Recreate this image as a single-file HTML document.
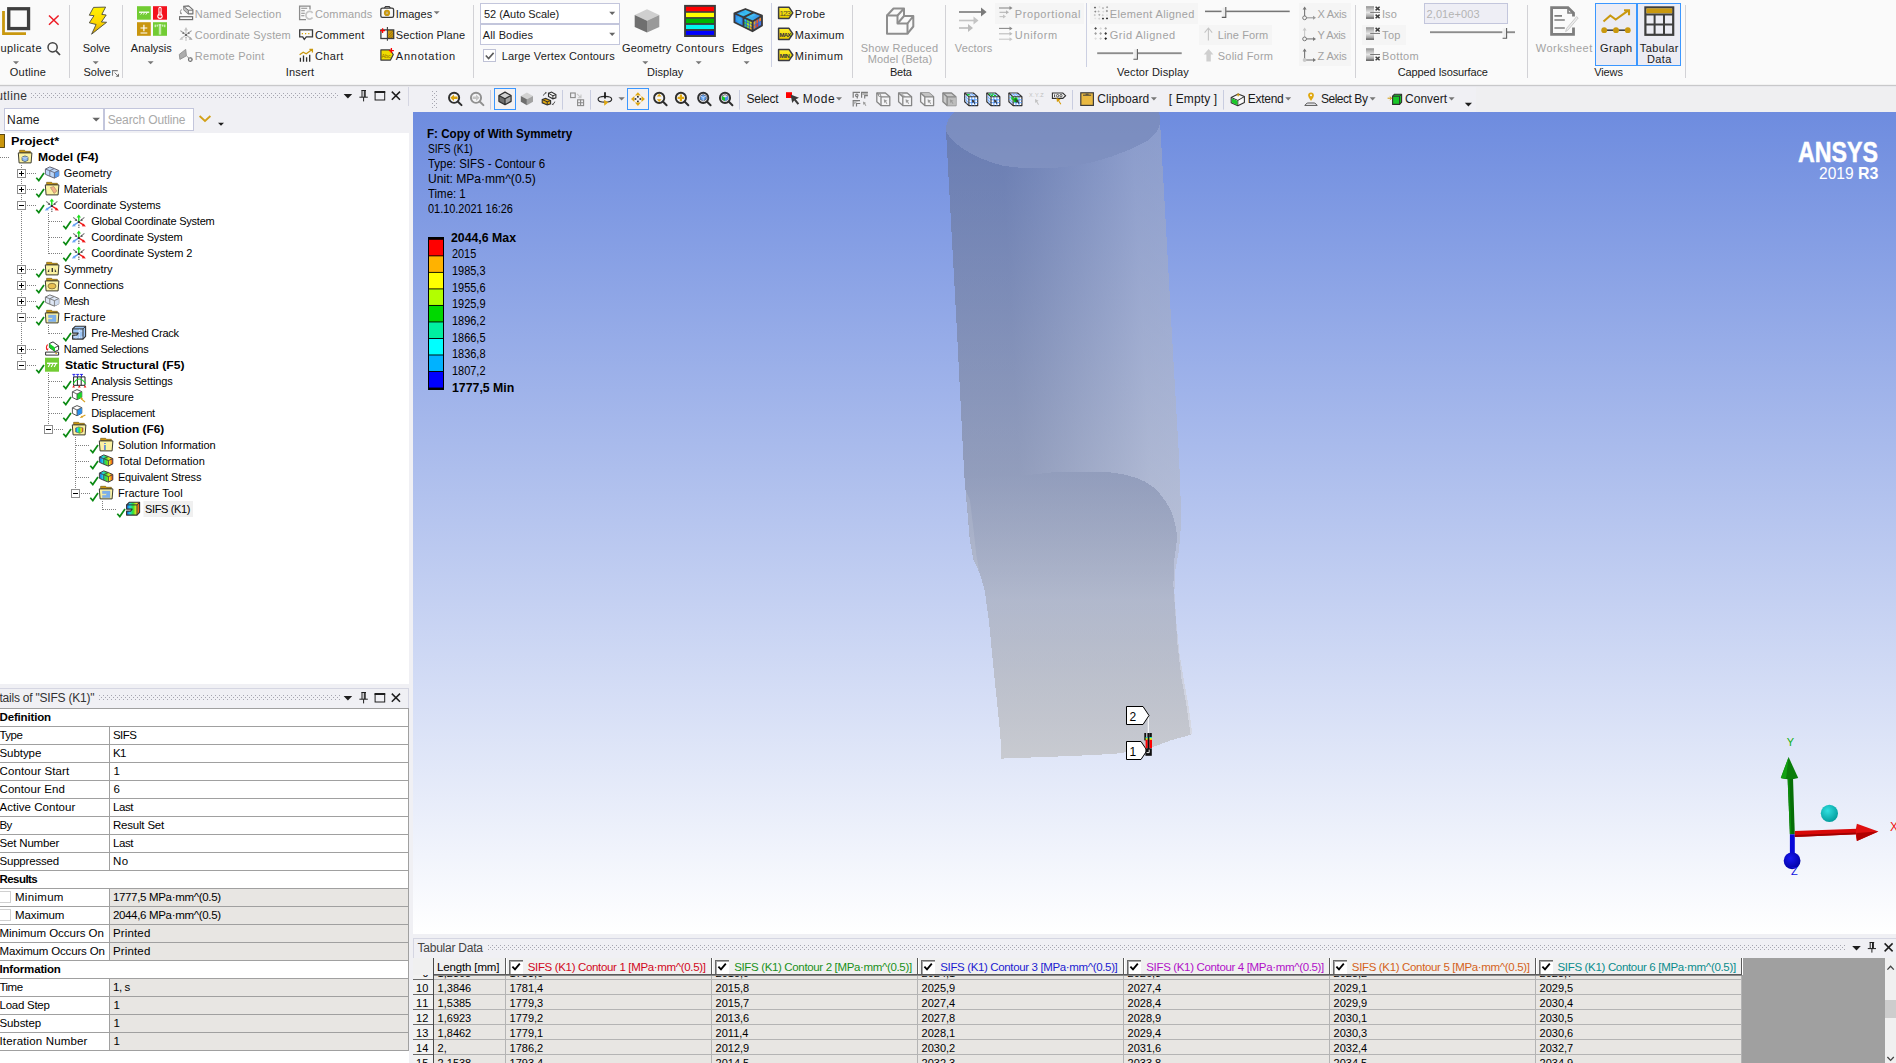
<!DOCTYPE html>
<html lang="en"><head><meta charset="utf-8"><title>ANSYS Mechanical</title>
<style>
html,body{margin:0;padding:0}
html{overflow:hidden;background:#f0f0f4}
body{width:1896px;height:1063px;overflow:hidden;position:relative;background:#f0f0f4;font-family:"Liberation Sans",sans-serif}
body>div,body>svg,body>span{position:absolute;display:block}
span{white-space:pre;line-height:1}
div{box-sizing:content-box}
</style></head>
<body>
<div style="left:0px;top:0px;width:1896px;height:85px;background:#fafafa;"></div>
<div style="left:0px;top:84px;width:1896px;height:1px;background:#f2f2f2;"></div>
<div style="left:0px;top:85px;width:1896px;height:1px;background:#c8c8ca;"></div>
<div style="left:0px;top:86px;width:1896px;height:1px;background:#e8e8ec;"></div>
<div style="left:995px;top:3px;width:88.5px;height:21px;background:#f5f5f5;"></div>
<div style="left:1090px;top:3px;width:108px;height:21px;background:#f5f5f5;"></div>
<div style="left:1198.5px;top:24.5px;width:73px;height:20.5px;background:#f5f5f5;"></div>
<div style="left:1298.5px;top:3px;width:52.5px;height:62.5px;background:#f5f5f5;"></div>
<div style="left:1362px;top:24.5px;width:44px;height:20.5px;background:#f5f5f5;"></div>
<div style="left:69px;top:5px;width:1px;height:73px;background:#d2d2d6;"></div>
<div style="left:122px;top:5px;width:1px;height:73px;background:#d2d2d6;"></div>
<div style="left:473px;top:5px;width:1px;height:73px;background:#d2d2d6;"></div>
<div style="left:852px;top:5px;width:1px;height:73px;background:#d2d2d6;"></div>
<div style="left:945px;top:5px;width:1px;height:73px;background:#d2d2d6;"></div>
<div style="left:1355px;top:5px;width:1px;height:73px;background:#d2d2d6;"></div>
<div style="left:1527px;top:5px;width:1px;height:73px;background:#d2d2d6;"></div>
<div style="left:1685px;top:5px;width:1px;height:73px;background:#d2d2d6;"></div>
<div style="left:771px;top:3px;width:1px;height:63.5px;background:#ccd0e2;"></div>
<div style="left:1086px;top:3px;width:1px;height:63.5px;background:#ccd0e2;"></div>
<div style="left:480px;top:3px;width:138px;height:19px;background:#fff;border:1px solid #c3c6dc;"></div>
<div style="left:480px;top:24px;width:138px;height:19px;background:#fff;border:1px solid #c3c6dc;"></div>
<div style="left:483px;top:49px;width:11px;height:11px;background:#fff;border:1px solid #bfc2d6;"></div>
<div style="left:1424px;top:3px;width:82px;height:19px;background:#eeeef5;border:1px solid #c3c6dc;"></div>
<div style="left:1595px;top:3px;width:40px;height:61px;background:#ececf4;border:1px solid #3b97ff;"></div>
<div style="left:1637px;top:3px;width:42px;height:61px;background:#ececf4;border:1px solid #3b97ff;"></div>
<span style="left:-8.00px;top:43.00px;font-size:11px;color:#1a1a1a;letter-spacing:0.455px;">Duplicate</span>
<span style="left:82.80px;top:43.00px;font-size:11px;color:#1a1a1a;letter-spacing:-0.033px;">Solve</span>
<span style="left:130.80px;top:43.00px;font-size:11px;color:#1a1a1a;letter-spacing:0.004px;">Analysis</span>
<span style="left:9.80px;top:67.00px;font-size:11px;color:#1a1a1a;letter-spacing:0.223px;">Outline</span>
<span style="left:83.60px;top:67.00px;font-size:11px;color:#1a1a1a;letter-spacing:-0.083px;">Solve</span>
<span style="left:194.80px;top:9.00px;font-size:11px;color:#a3a3a3;letter-spacing:0.194px;">Named Selection</span>
<span style="left:194.80px;top:30.00px;font-size:11px;color:#a3a3a3;letter-spacing:0.153px;">Coordinate System</span>
<span style="left:194.80px;top:51.00px;font-size:11px;color:#a3a3a3;letter-spacing:0.259px;">Remote Point</span>
<span style="left:285.80px;top:67.00px;font-size:11px;color:#1a1a1a;letter-spacing:0.157px;">Insert</span>
<span style="left:315.00px;top:9.00px;font-size:11px;color:#a3a3a3;letter-spacing:0.136px;">Commands</span>
<span style="left:315.00px;top:30.00px;font-size:11px;color:#1a1a1a;letter-spacing:0.252px;">Comment</span>
<span style="left:315.00px;top:51.00px;font-size:11px;color:#1a1a1a;letter-spacing:0.323px;">Chart</span>
<span style="left:395.80px;top:9.00px;font-size:11px;color:#1a1a1a;letter-spacing:0.064px;">Images</span>
<span style="left:395.80px;top:30.00px;font-size:11px;color:#1a1a1a;letter-spacing:0.126px;">Section Plane</span>
<span style="left:395.80px;top:51.00px;font-size:11px;color:#1a1a1a;letter-spacing:0.755px;">Annotation</span>
<span style="left:484.00px;top:9.00px;font-size:11px;color:#1a1a1a;letter-spacing:-0.045px;">52 (Auto Scale)</span>
<span style="left:482.80px;top:30.00px;font-size:11px;color:#1a1a1a;letter-spacing:0.142px;">All Bodies</span>
<span style="left:501.70px;top:51.00px;font-size:11px;color:#1a1a1a;letter-spacing:0.146px;">Large Vertex Contours</span>
<span style="left:622.00px;top:43.00px;font-size:11px;color:#1a1a1a;letter-spacing:0.143px;">Geometry</span>
<span style="left:675.80px;top:43.00px;font-size:11px;color:#1a1a1a;letter-spacing:0.537px;">Contours</span>
<span style="left:732.00px;top:43.00px;font-size:11px;color:#1a1a1a;letter-spacing:-0.051px;">Edges</span>
<span style="left:647.00px;top:67.00px;font-size:11px;color:#1a1a1a;letter-spacing:0.037px;">Display</span>
<span style="left:794.80px;top:9.00px;font-size:11px;color:#1a1a1a;letter-spacing:0.260px;">Probe</span>
<span style="left:794.80px;top:30.00px;font-size:11px;color:#1a1a1a;letter-spacing:0.288px;">Maximum</span>
<span style="left:794.80px;top:51.00px;font-size:11px;color:#1a1a1a;letter-spacing:0.596px;">Minimum</span>
<span style="left:860.80px;top:43.00px;font-size:11px;color:#a3a3a3;letter-spacing:0.236px;">Show Reduced</span>
<span style="left:867.80px;top:54.00px;font-size:11px;color:#a3a3a3;letter-spacing:0.129px;">Model (Beta)</span>
<span style="left:890.00px;top:67.00px;font-size:11px;color:#1a1a1a;letter-spacing:-0.280px;">Beta</span>
<span style="left:954.80px;top:43.00px;font-size:11px;color:#a3a3a3;letter-spacing:0.119px;">Vectors</span>
<span style="left:1014.80px;top:9.00px;font-size:11px;color:#a3a3a3;letter-spacing:0.579px;">Proportional</span>
<span style="left:1014.80px;top:30.00px;font-size:11px;color:#a3a3a3;letter-spacing:0.647px;">Uniform</span>
<span style="left:1109.80px;top:9.00px;font-size:11px;color:#a3a3a3;letter-spacing:0.357px;">Element Aligned</span>
<span style="left:1109.80px;top:30.00px;font-size:11px;color:#a3a3a3;letter-spacing:0.497px;">Grid Aligned</span>
<span style="left:1117.00px;top:67.00px;font-size:11px;color:#1a1a1a;letter-spacing:0.114px;">Vector Display</span>
<span style="left:1217.80px;top:30.00px;font-size:11px;color:#a3a3a3;letter-spacing:0.121px;">Line Form</span>
<span style="left:1217.80px;top:51.00px;font-size:11px;color:#a3a3a3;letter-spacing:0.224px;">Solid Form</span>
<span style="left:1317.50px;top:9.00px;font-size:11px;color:#a3a3a3;letter-spacing:-0.256px;">X Axis</span>
<span style="left:1317.50px;top:30.00px;font-size:11px;color:#a3a3a3;letter-spacing:-0.415px;">Y Axis</span>
<span style="left:1317.50px;top:51.00px;font-size:11px;color:#a3a3a3;letter-spacing:-0.131px;">Z Axis</span>
<span style="left:1382.00px;top:9.00px;font-size:11px;color:#a3a3a3;letter-spacing:0.056px;">Iso</span>
<span style="left:1382.00px;top:30.00px;font-size:11px;color:#a3a3a3;letter-spacing:0.375px;">Top</span>
<span style="left:1382.00px;top:51.00px;font-size:11px;color:#a3a3a3;letter-spacing:0.388px;">Bottom</span>
<span style="left:1426.50px;top:9.00px;font-size:11px;color:#b4b4b4;letter-spacing:0.111px;">2,01e+003</span>
<span style="left:1397.80px;top:67.00px;font-size:11px;color:#1a1a1a;letter-spacing:-0.134px;">Capped Isosurface</span>
<span style="left:1535.80px;top:43.00px;font-size:11px;color:#a3a3a3;letter-spacing:0.503px;">Worksheet</span>
<span style="left:1600.00px;top:43.00px;font-size:11px;color:#1a1a1a;letter-spacing:0.405px;">Graph</span>
<span style="left:1639.80px;top:43.00px;font-size:11px;color:#1a1a1a;letter-spacing:0.437px;">Tabular</span>
<span style="left:1647.00px;top:54.00px;font-size:11px;color:#1a1a1a;letter-spacing:0.350px;">Data</span>
<span style="left:1594.20px;top:67.00px;font-size:11px;color:#1a1a1a;letter-spacing:-0.089px;">Views</span>
<svg style="left:0px;top:0px;" width="1896" height="86" viewBox="0 0 1896 86"><path d="M13.0,61.2 h6 l-3.0,3 z" fill="#777"/><path d="M92.7,61.2 h6 l-3.0,3 z" fill="#777"/><path d="M147.6,61.2 h6 l-3.0,3 z" fill="#777"/><path d="M642.3,61.2 h6 l-3.0,3 z" fill="#777"/><path d="M695.7,61.2 h6 l-3.0,3 z" fill="#777"/><path d="M743.6,61.2 h6 l-3.0,3 z" fill="#777"/><path d="M433.7,11.3 h6 l-3.0,3 z" fill="#777"/><path d="M609.2,11.8 h6 l-3.0,3.2 z" fill="#666"/><path d="M609.2,32.8 h6 l-3.0,3.2 z" fill="#666"/><path d="M3.5,11 V33.6 H26" fill="none" stroke="#c9980f" stroke-width="2.8"/><rect x="8.75" y="8.75" width="19.8" height="19.8" fill="#fafafa" stroke="#3e3e3e" stroke-width="3.3"/><path d="M49,15.5 L58.6,24.8 M58.6,15.5 L49,24.8" stroke="#ee1c25" stroke-width="1.5" fill="none"/><circle cx="52.6" cy="47.3" r="4.6" fill="none" stroke="#444" stroke-width="1.5"/><path d="M56,50.8 L60,55" stroke="#444" stroke-width="1.8"/><defs><linearGradient id="lg1" x1="0" y1="0" x2="0" y2="1"><stop offset="0" stop-color="#fff200"/><stop offset="0.55" stop-color="#ffd800"/><stop offset="1" stop-color="#d8a400"/></linearGradient></defs><path d="M93.5,7.4 L105.6,7.1 L101.8,14.4 L106.2,15 L101.4,22 L106.6,22.3 L91.6,34.2 L96.1,24.5 L89.3,22.8 L94,15.7 L89.3,15.2 Z" fill="url(#lg1)" stroke="#4a4a3c" stroke-width="0.9" stroke-linejoin="round"/><path d="M112.5,75.8 V70.6 H117.8" stroke="#7e7e7e" stroke-width="1.1" fill="none"/><path d="M114.6,72.6 l2.6,2.6" stroke="#7e7e7e" stroke-width="1"/><path d="M119,73.4 v3.4 h-3.4 z" fill="#6a6a6a"/><rect x="137" y="6.2" width="13.8" height="13.5" fill="#72cc33"/><rect x="153" y="6.2" width="14" height="13.5" fill="#f3121d"/><rect x="137" y="22.2" width="13.8" height="13.6" fill="#c9960e"/><rect x="153" y="22.2" width="14" height="13.6" fill="#72cc33"/><path d="M139,12.2 h10.2" stroke="#fff" stroke-width="1.3" fill="none"/><path d="M140.6,14.6 l1.4,-2 M143.2,14.6 l1.4,-2 M145.8,14.6 l1.4,-2" stroke="#fff" stroke-width="0.9" fill="none"/><path d="M160,8.4 v7" stroke="#fff" stroke-width="3.2" stroke-linecap="round"/><circle cx="160" cy="16.3" r="2.7" fill="#fff"/><path d="M160,8.6 v7" stroke="#f3121d" stroke-width="1.2" stroke-linecap="round"/><circle cx="160" cy="16.3" r="1.5" fill="#f3121d"/><path d="M160,11.5 v4.5" stroke="#fff" stroke-width="0.9"/><path d="M140.5,28 h6.8 M143.9,24.8 v6.4 M140.5,33 h6.8" stroke="#fff" stroke-width="1.2"/><path d="M160,25 v9.6" stroke="#c4ecaa" stroke-width="2.4" fill="none"/><path d="M155.2,24.6 v2.6 M157.2,24.6 v2 M162.8,24.6 v2 M164.8,24.6 v2.6 M158.6,24.8 h2.8" stroke="#f4fff0" stroke-width="1" fill="none"/><path d="M183.7,6.4 L188.6,5.9 L192.9,9.6 V13.9 H188.3 L183.9,9.8 Z" fill="#f4f4f4" stroke="#6e6e6e" stroke-width="1.1" stroke-linejoin="round"/><path d="M183.7,6.4 L188.3,10.2 V13.9 L183.9,9.8 Z" fill="#bdbdbd"/><path d="M183.7,6.4 L188.3,10.2 H192.9 M188.3,10.2 V13.9" fill="none" stroke="#6e6e6e" stroke-width="1"/><rect x="179.6" y="16.7" width="13" height="2.9" fill="#f8f8f8" stroke="#6e6e6e" stroke-width="1.2"/><path d="M181.4,9.4 q-1.8,2.2 -0.4,4.4" fill="none" stroke="#8a8a8a" stroke-width="1"/><path d="M179.9,13 l1.3,1.6 l0.9,-1.9 z" fill="#8a8a8a"/><g fill="none" stroke-width="1.2"><path d="M186,34.6 V29.5" stroke="#c4c4c4"/><path d="M186,35 L180.8,38.8" stroke="#c8c8c8"/><path d="M186,35 L191.2,38.8" stroke="#b4b4b4"/><path d="M180.4,30.6 L184,33.4" stroke="#9c9c9c"/><path d="M191.6,30.6 L188,33.4" stroke="#9c9c9c"/><path d="M186,37 v3.6" stroke="#b0b0b0" stroke-width="1.6" stroke-dasharray="1.6 0.8"/></g><path d="M186,27 l-2,3.4 h4 z" fill="#c4c4c4"/><path d="M179.4,40 l3.9,-0.5 l-1.8,-2.6 z" fill="#c8c8c8"/><path d="M192.6,40 l-3.9,-0.5 l1.8,-2.6 z" fill="#aaa"/><path d="M185,34.2 l-3,-0.5 l1.7,-2 z M187,34.2 l3,-0.5 l-1.7,-2 z" fill="#7a7a7a"/><rect x="185" y="34" width="2" height="2" fill="#6a6a6a"/><path d="M179.3,54.4 L185.7,49.4 L186.4,55.8 L179.9,59.4 Z" fill="#adadad" stroke="#8e8e8e" stroke-width="0.9" stroke-linejoin="round"/><path d="M186.4,55.8 l2.6,2.4" stroke="#9a9a9a" stroke-width="1"/><circle cx="190.3" cy="59.6" r="1.9" fill="#f8f8f8" stroke="#6e6e6e" stroke-width="1.1"/><path d="M188.4,59.6 h0.9 M191.3,59.6 h0.9 M190.3,57.7 v0.9 M190.3,60.6 v0.9" stroke="#6e6e6e" stroke-width="0.8"/><g fill="none" stroke="#8c8c8c" stroke-width="1.3"><path d="M310,9.6 V6.2 H299.6 V19.6 H306"/><path d="M301.2,8.2 h6 M301.2,10.7 h3.6 M301.2,13.2 h3.6 M301.2,15.7 h3.2" stroke-width="1.1"/></g><path d="M312.6,13 a3.7,3.9 0 1 0 0,4.6" fill="none" stroke="#c6c6c6" stroke-width="1.7"/><path d="M299.7,29.9 h12.8 v7 h-6.2 l-2,2.5 l-1.6,-2.5 h-3 z" fill="none" stroke="#3c3c3c" stroke-width="1.3" stroke-linejoin="miter"/><path d="M301.8,33.6 h1.2 M305,33.6 h1.2 M308.2,33.6 h1.2" stroke="#d9a400" stroke-width="1.2"/><path d="M300.4,61.8 v-4 M303.5,61.8 v-6.3 M306.6,61.8 v-4.6 M309.7,61.8 v-7" stroke="#2e2e2e" stroke-width="1.3"/><path d="M299.6,54.8 l3.6,-2.6 l3,1.6 l5.6,-4 M309.4,49.4 h3 v3" fill="none" stroke="#c9980f" stroke-width="1.3"/><path d="M384.4,8.2 l1.2,-1.6 h3.6 l1.2,1.6" fill="none" stroke="#3c3c3c" stroke-width="1.2"/><rect x="380.8" y="8.2" width="12.8" height="9.2" rx="1.6" fill="#f8f8f8" stroke="#3c3c3c" stroke-width="1.3"/><circle cx="387" cy="12.9" r="3.1" fill="#c9980f"/><circle cx="387" cy="12.9" r="1.2" fill="#f0e0b0"/><circle cx="387" cy="12.9" r="0.6" fill="#6a5000"/><rect x="388" y="30" width="5.6" height="8.4" fill="#c9980f"/><path d="M388.4,35.4 l4.6,-4.6 M388.4,38 l5,-5 M390.6,38.2 l3,-3" stroke="#96700a" stroke-width="0.9"/><rect x="380.9" y="29.9" width="12.8" height="8.6" fill="none" stroke="#3c3c3c" stroke-width="1.3"/><path d="M387.4,27 v13.8" stroke="#3c3c3c" stroke-width="1.1"/><path d="M380.2,30.6 h4.8 M382.6,28.2 v4.8" stroke="#f00" stroke-width="1.3"/><path d="M380.9,49.9 h9.2 l3.2,4.6 l-2.8,5.6 h-9.6 z" fill="#efdc00" stroke="#3c3c3c" stroke-width="1.2" stroke-linejoin="round"/><path d="M388.9,50.6 h5 M391.4,48.1 v5" stroke="#f00" stroke-width="1.3"/><path d="M485.8,55.5 l2.8,3 l5,-5.6" fill="none" stroke="#5a5a5a" stroke-width="1.6"/><path d="M647,9.3 L659.3,15 L647,20.8 L634.7,15 Z" fill="#cfcfcf"/><path d="M634.7,15 L647,20.8 V32.6 L634.7,27 Z" fill="#6f6f6f"/><path d="M659.3,15 L647,20.8 V32.6 L659.3,27 Z" fill="#999"/><rect x="684.1" y="4.9" width="31.8" height="32.1" fill="#3c3c3c"/><rect x="686" y="6.8" width="28" height="4.40" fill="#ff0000"/><rect x="686" y="12.8" width="28" height="4.30" fill="#ffff00"/><rect x="686" y="18.7" width="28" height="4.40" fill="#00b400"/><rect x="686" y="24.9" width="28" height="4.10" fill="#00f6f0"/><rect x="686" y="30.9" width="28" height="4.00" fill="#0000ff"/><defs><linearGradient id="eg1" x1="0" y1="0" x2="1" y2="0"><stop offset="0" stop-color="#2a78e8"/><stop offset="0.45" stop-color="#38c0f0"/><stop offset="1" stop-color="#3a88e8"/></linearGradient><linearGradient id="eg3" x1="0" y1="0" x2="1" y2="0"><stop offset="0" stop-color="#2468e0"/><stop offset="0.5" stop-color="#34a8f0"/><stop offset="1" stop-color="#2a74e4"/></linearGradient></defs><path d="M734.4,13.3 L745.4,9 L762,15.7 L752.5,21.4 Z" fill="url(#eg1)"/><path d="M734.4,13.3 L743.5,17.35 V26.8 L734.4,22.3 Z" fill="url(#eg3)"/><path d="M743.5,17.35 L752.5,21.4 V31.3 L743.5,26.8 Z" fill="#2a60d0"/><path d="M744.10,18.50 l2.2,1 v2.3 l-2.2,-1 z" fill="#28c8d8"/><path d="M744.10,21.50 l2.2,1 v2.3 l-2.2,-1 z" fill="#30d060"/><path d="M744.10,24.50 l2.2,1 v2.3 l-2.2,-1 z" fill="#30b8a0"/><path d="M746.95,19.78 l2.2,1 v2.3 l-2.2,-1 z" fill="#60d840"/><path d="M746.95,22.78 l2.2,1 v2.3 l-2.2,-1 z" fill="#a8e020"/><path d="M746.95,25.78 l2.2,1 v2.3 l-2.2,-1 z" fill="#80d830"/><path d="M749.80,21.06 l2.2,1 v2.3 l-2.2,-1 z" fill="#d8e820"/><path d="M749.80,24.06 l2.2,1 v2.3 l-2.2,-1 z" fill="#f0d020"/><path d="M749.80,27.06 l2.2,1 v2.3 l-2.2,-1 z" fill="#f0b020"/><path d="M752.5,21.4 L762,15.7 V25.6 L752.5,31.3 Z" fill="#3466d8"/><path d="M753.60,21.60 l1.8,-1.08 v3.6 l-1.8,1.08 z" fill="#f0a020"/><path d="M753.60,25.90 l1.8,-1.08 v3.2 l-1.8,1.08 z" fill="#f07818"/><path d="M756.40,19.92 l1.8,-1.08 v3.6 l-1.8,1.08 z" fill="#f06018"/><path d="M756.40,24.22 l1.8,-1.08 v3.2 l-1.8,1.08 z" fill="#e83818"/><path d="M759.20,18.24 l1.8,-1.08 v3.6 l-1.8,1.08 z" fill="#f08828"/><path d="M759.20,22.54 l1.8,-1.08 v3.2 l-1.8,1.08 z" fill="#4878e0"/><path d="M737,14.6 l4.6,-1.8 l3.4,1.5 l-4.6,1.9 z" fill="#40d0f0" fill-opacity="0.7"/><path d="M747.5,15 l4.6,-1.8 l4,1.7 l-4.4,2.2 z" fill="#50c8f0" fill-opacity="0.55"/><path d="M736,16.2 l5.6,2.6 v4 l-5.6,-2.6 z" fill="#38b0f0" fill-opacity="0.6"/><path d="M734.4,13.3 L745.4,9 L762,15.7 V25.6 L752.5,31.3 L734.4,22.3 Z M734.4,13.3 L752.5,21.4 L762,15.7 M752.5,21.4 V31.3 M743.5,17.35 V26.8 M743.5,17.35 L753.7,12.35" fill="none" stroke="#3a3a3a" stroke-width="1.8" stroke-linejoin="round"/><defs><linearGradient id="tagg" x1="0" y1="0" x2="0" y2="1"><stop offset="0" stop-color="#fff030"/><stop offset="0.6" stop-color="#f4dc08"/><stop offset="1" stop-color="#e4c800"/></linearGradient></defs><path d="M778.6,7.2 h10.4 l3.8,5.6 l-3.8,5.6 h-10.4 z" fill="url(#tagg)" stroke="#3c3c42" stroke-width="1.5" stroke-linejoin="round"/><path d="M778.6,28.3 h10.4 l3.8,5.6 l-3.8,5.6 h-10.4 z" fill="url(#tagg)" stroke="#3c3c42" stroke-width="1.5" stroke-linejoin="round"/><path d="M778.6,49.400000000000006 h10.4 l3.8,5.6 l-3.8,5.6 h-10.4 z" fill="url(#tagg)" stroke="#3c3c42" stroke-width="1.5" stroke-linejoin="round"/><g fill="none" stroke="#8e8e8e" stroke-width="2" stroke-linejoin="round"><path d="M887,15.5 h10.5 v8 h10 v10.2 h-20.5 z"/><path d="M887,15.5 l6.5,-7 h10.5 l-6.5,7 M904,8.5 v7.5 l-6.5,7.5 M904,16 h9.3 l-5.8,7.5 M913.3,16 v10.5 l-5.8,7.2"/></g><path d="M959,12 h23" stroke="#7a7a7a" stroke-width="1.6"/><path d="M981,7.6 l5.6,4.4 l-5.6,4.4 z" fill="#7a7a7a"/><path d="M959,20.5 h15" stroke="#c4c4c4" stroke-width="1.6"/><path d="M973.5,16.5 l5,4 l-5,4 z" fill="#c4c4c4"/><path d="M959,28 h10" stroke="#bcbcbc" stroke-width="1.6"/><path d="M968,24 l5,4 l-5,4 z" fill="#bcbcbc"/><path d="M999,8 h11" stroke="#8a8a8a" stroke-width="1.1"/><path d="M1009.5,6 l3,2 l-3,2 z" fill="#8a8a8a"/><path d="M999.5,12.3 h7" stroke="#b4b4b4" stroke-width="1.1"/><path d="M1006,10.3 l3,2 l-3,2 z" fill="#b4b4b4"/><path d="M999.5,16.6 h4" stroke="#c4c4c4" stroke-width="1.1"/><path d="M1003,14.6 l3,2 l-3,2 z" fill="#c4c4c4"/><path d="M999,28.4 h11" stroke="#8a8a8a" stroke-width="1.1"/><path d="M1009.5,26.4 l3,2 l-3,2 z" fill="#8a8a8a"/><path d="M999,33.8 h11" stroke="#bbb" stroke-width="1.1"/><path d="M1009.5,31.8 l3,2 l-3,2 z" fill="#bbb"/><path d="M999,39.2 h11" stroke="#c8c8c8" stroke-width="1.1"/><path d="M1009.5,37.2 l3,2 l-3,2 z" fill="#c8c8c8"/><path d="M1095.6,27.0 L1097.0,28.4 L1095.6,29.799999999999997 L1094.1999999999998,28.4 Z" fill="#4a4a4a"/><path d="M1100.6499999999999,27.0 L1102.05,28.4 L1100.6499999999999,29.799999999999997 L1099.2499999999998,28.4 Z" fill="#dcdcdc"/><path d="M1105.6999999999998,27.0 L1107.1,28.4 L1105.6999999999998,29.799999999999997 L1104.2999999999997,28.4 Z" fill="#a8a8a8"/><path d="M1095.6,32.1 L1097.0,33.5 L1095.6,34.9 L1094.1999999999998,33.5 Z" fill="#a0a0a0"/><path d="M1100.6499999999999,32.1 L1102.05,33.5 L1100.6499999999999,34.9 L1099.2499999999998,33.5 Z" fill="#a0a0a0"/><path d="M1105.6999999999998,32.1 L1107.1,33.5 L1105.6999999999998,34.9 L1104.2999999999997,33.5 Z" fill="#3a3a3a"/><path d="M1095.6,37.199999999999996 L1097.0,38.599999999999994 L1095.6,39.99999999999999 L1094.1999999999998,38.599999999999994 Z" fill="#dedede"/><path d="M1100.6499999999999,37.199999999999996 L1102.05,38.599999999999994 L1100.6499999999999,39.99999999999999 L1099.2499999999998,38.599999999999994 Z" fill="#c8c8c8"/><path d="M1105.6999999999998,37.199999999999996 L1107.1,38.599999999999994 L1105.6999999999998,39.99999999999999 L1104.2999999999997,38.599999999999994 Z" fill="#1e1e1e"/><path d="M1095.0,6.449999999999999 L1096.15,7.6 L1095.0,8.75 L1093.85,7.6 Z" fill="#5a5a5a"/><path d="M1099.5,5.85 L1100.65,7.0 L1099.5,8.15 L1098.35,7.0 Z" fill="#e0e0e0"/><path d="M1103.0,6.949999999999999 L1104.15,8.1 L1103.0,9.25 L1101.85,8.1 Z" fill="#b0b0b0"/><path d="M1107.1000000000001,6.049999999999999 L1108.2500000000002,7.199999999999999 L1107.1000000000001,8.35 L1105.95,7.199999999999999 Z" fill="#9a9a9a"/><path d="M1095.3,10.45 L1096.45,11.6 L1095.3,12.75 L1094.1499999999999,11.6 Z" fill="#8a8a8a"/><path d="M1098.6000000000001,10.249999999999998 L1099.7500000000002,11.399999999999999 L1098.6000000000001,12.549999999999999 L1097.45,11.399999999999999 Z" fill="#b8b8b8"/><path d="M1103.3,10.549999999999999 L1104.45,11.7 L1103.3,12.85 L1102.1499999999999,11.7 Z" fill="#d8d8d8"/><path d="M1106.9,9.85 L1108.0500000000002,11.0 L1106.9,12.15 L1105.75,11.0 Z" fill="#8a8a8a"/><path d="M1094.8,13.950000000000001 L1095.95,15.100000000000001 L1094.8,16.25 L1093.6499999999999,15.100000000000001 Z" fill="#c0c0c0"/><path d="M1099.3000000000002,13.65 L1100.4500000000003,14.8 L1099.3000000000002,15.950000000000001 L1098.15,14.8 Z" fill="#a8a8a8"/><path d="M1102.8,14.05 L1103.95,15.200000000000001 L1102.8,16.35 L1101.6499999999999,15.200000000000001 Z" fill="#c8c8c8"/><path d="M1107.0,13.950000000000001 L1108.15,15.100000000000001 L1107.0,16.25 L1105.85,15.100000000000001 Z" fill="#e0e0e0"/><path d="M1095.2,17.25 L1096.3500000000001,18.4 L1095.2,19.549999999999997 L1094.05,18.4 Z" fill="#e4e4e4"/><path d="M1099.2,17.55 L1100.3500000000001,18.7 L1099.2,19.849999999999998 L1098.05,18.7 Z" fill="#d0d0d0"/><path d="M1103.0,17.45 L1104.15,18.599999999999998 L1103.0,19.749999999999996 L1101.85,18.599999999999998 Z" fill="#2a2a2a"/><path d="M1107.0,17.25 L1108.15,18.4 L1107.0,19.549999999999997 L1105.85,18.4 Z" fill="#1e1e1e"/><rect x="1097.2" y="52.400000000000006" width="84.5" height="1.5" fill="#767676"/><rect x="1097.2" y="53.900000000000006" width="84.5" height="0.8" fill="#e2e2e2"/><rect x="1133.4" y="48.900000000000006" width="4.4" height="10.6" fill="#ececec"/><path d="M1133.7,59.2 V48.900000000000006 H1137.4" fill="none" stroke="#fdfdfd" stroke-width="0.8"/><path d="M1137.4,48.900000000000006 V59.2 H1133.4" fill="none" stroke="#5e5e5e" stroke-width="1.1"/><rect x="1205" y="10.6" width="84.70000000000005" height="1.5" fill="#767676"/><rect x="1205" y="12.1" width="84.70000000000005" height="0.8" fill="#e2e2e2"/><rect x="1221.8" y="7.1000000000000005" width="4.4" height="10.6" fill="#ececec"/><path d="M1222.1,17.4 V7.1000000000000005 H1225.8" fill="none" stroke="#fdfdfd" stroke-width="0.8"/><path d="M1225.8,7.1000000000000005 V17.4 H1221.8" fill="none" stroke="#5e5e5e" stroke-width="1.1"/><rect x="1430" y="31.400000000000002" width="85" height="1.5" fill="#767676"/><rect x="1430" y="32.900000000000006" width="85" height="0.8" fill="#e2e2e2"/><rect x="1502.6" y="27.900000000000002" width="4.4" height="10.6" fill="#ececec"/><path d="M1502.8999999999999,38.2 V27.900000000000002 H1506.6" fill="none" stroke="#fdfdfd" stroke-width="0.8"/><path d="M1506.6,27.900000000000002 V38.2 H1502.6" fill="none" stroke="#5e5e5e" stroke-width="1.1"/><path d="M1208.4,40.6 V28.5 M1204.6,32.6 L1208.4,28 L1212.2,32.6" fill="none" stroke="#c4c4c4" stroke-width="1.1"/><path d="M1208.6,49 l4.8,5.6 h-2.6 v6.8 h-4.4 v-6.8 h-2.6 z" fill="#cfcfcf"/><path d="M1304.6,17.8 V7.800000000000001" stroke="#777" stroke-width="1.1"/><path d="M1302.6,9.4 l2,-3 l2,3 z" fill="#777"/><path d="M1304.6,17.8 H1314" stroke="#999" stroke-width="1.1"/><path d="M1313,15.8 l3,2 l-3,2 z" fill="#999"/><circle cx="1304.6" cy="17.8" r="1.9" fill="#f4f4f4" stroke="#777" stroke-width="1"/><path d="M1304.6,38.900000000000006 V28.900000000000006" stroke="#c8c8c8" stroke-width="1.1"/><path d="M1302.6,30.500000000000007 l2,-3 l2,3 z" fill="#c8c8c8"/><path d="M1304.6,38.900000000000006 H1314" stroke="#777" stroke-width="1.1"/><path d="M1313,36.900000000000006 l3,2 l-3,2 z" fill="#777"/><circle cx="1304.6" cy="38.900000000000006" r="1.9" fill="#f4f4f4" stroke="#777" stroke-width="1"/><path d="M1304.6,60.0 V50.0" stroke="#777" stroke-width="1.1"/><path d="M1302.6,51.6 l2,-3 l2,3 z" fill="#777"/><path d="M1304.6,60.0 H1314" stroke="#777" stroke-width="1.1"/><path d="M1313,58.0 l3,2 l-3,2 z" fill="#777"/><circle cx="1304.6" cy="60.0" r="1.9" fill="#c8c8c8"/><defs><linearGradient id="ig" x1="0" y1="0" x2="0" y2="1"><stop offset="0" stop-color="#8e8e8e"/><stop offset="0.18" stop-color="#b4b4b4"/><stop offset="0.5" stop-color="#e6e6e6"/><stop offset="0.82" stop-color="#a4a4a4"/><stop offset="1" stop-color="#4e4e4e"/></linearGradient></defs><rect x="1366" y="6.20" width="8" height="12.6" fill="url(#ig)"/><path d="M1370.2,12.40 h9.8" stroke="#6a6a6a" stroke-width="0.9"/><path d="M1375.6,6.8 l4,3.6 M1379.6,6.8 l-4,3.6" stroke="#3c3c3c" stroke-width="1.5"/><path d="M1375.6,14.600000000000001 l4,3.6 M1379.6,14.600000000000001 l-4,3.6" stroke="#3c3c3c" stroke-width="1.5"/><rect x="1366" y="27.25" width="8" height="12.6" fill="url(#ig)"/><path d="M1370.2,33.45 h9.8" stroke="#6a6a6a" stroke-width="0.9"/><path d="M1375.6,27.85 l4,3.6 M1379.6,27.85 l-4,3.6" stroke="#3c3c3c" stroke-width="1.5"/><rect x="1366" y="48.30" width="8" height="12.6" fill="url(#ig)"/><path d="M1370.2,54.50 h9.8" stroke="#6a6a6a" stroke-width="0.9"/><path d="M1375.6,56.7 l4,3.6 M1379.6,56.7 l-4,3.6" stroke="#3c3c3c" stroke-width="1.5"/><g fill="none" stroke="#7e7e7e"><path d="M1573.5,27.4 V34.4 H1551.6 V7.6 H1568 L1573.5,13 V16.5" stroke-width="2.8" stroke-linejoin="miter"/><path d="M1568,7.6 V13 H1573.5" stroke-width="1.6"/><path d="M1554.4,15.8 h7.6 M1554.4,20 h10.4 M1554.4,28 h10.4" stroke-width="1.7"/></g><path d="M1565.6,31.6 l1,-3.2 l10,-11.8 l1.6,1.4 l-10,11.8 z" fill="#ececec" stroke="#c2c2c2" stroke-width="0.8"/><path d="M1603.5,21.5 l6.8,-6 l5.4,4 l12.4,-8.8 M1624,10.3 h5 v5" fill="none" stroke="#c9980f" stroke-width="2.1"/><path d="M1604,30.2 h24" stroke="#444" stroke-width="1.6"/><circle cx="1604.2" cy="30.2" r="2.9" fill="#c9980f"/><circle cx="1616" cy="30.2" r="2.9" fill="#c9980f"/><circle cx="1627.8" cy="30.2" r="2.9" fill="#c9980f"/><rect x="1645.4" y="7.4" width="27.8" height="27.4" fill="none" stroke="#3e3e3e" stroke-width="2.2"/><rect x="1646.4" y="8.4" width="25.8" height="5" fill="#c9980f"/><path d="M1645.4,14.4 h27.8 M1645.4,24.4 h27.8 M1654.6,14.4 v20.4 M1664,14.4 v20.4" stroke="#3e3e3e" stroke-width="2"/></svg>
<span style="left:381.60px;top:54.00px;font-size:5.5px;color:#8a6c00;letter-spacing:-0.158px;">Abc</span>
<span style="left:779.60px;top:10.00px;font-size:8px;color:#55502c;letter-spacing:-0.980px;">123</span>
<span style="left:779.60px;top:32.00px;font-size:6px;color:#2e2e40;font-weight:bold;letter-spacing:-0.890px;">MAX</span>
<span style="left:779.80px;top:53.00px;font-size:6px;color:#2e2e40;font-weight:bold;letter-spacing:-0.513px;">MIN</span>
<div style="left:0px;top:87px;width:1896px;height:25px;background:#f0f0f4;"></div>
<div style="left:1476px;top:87px;width:420px;height:25px;background:#efeff1;"></div>
<svg style="left:0px;top:86px;" width="1896" height="48" viewBox="0 86 1896 48"><defs><pattern id="dots" x="3" y="1" width="4" height="4" patternUnits="userSpaceOnUse"><rect x="0" y="0" width="1" height="1" fill="#a6a6b0"/><rect x="2" y="2" width="1" height="1" fill="#a6a6b0"/></pattern><pattern id="dotsg" x="0" y="3" width="4" height="4" patternUnits="userSpaceOnUse"><rect x="0" y="0" width="1" height="1" fill="#a6a6b0"/><rect x="2" y="2" width="1" height="1" fill="#a6a6b0"/></pattern></defs><rect x="31" y="93" width="308" height="5" fill="url(#dots)"/><path d="M343.6,94 h8.6 l-4.3,4.4 z" fill="#1e1e1e"/><path d="M361.4,90.5 h4.6 M362.0,90.5 v6.6 M365.2,90.5 v6.6 M364.29999999999995,90.5 v6.6 M359.4,97.2 h8.4 M363.59999999999997,97.2 v4.2" stroke="#1e1e1e" stroke-width="1" fill="none"/><rect x="375.1" y="92" width="9.6" height="8" fill="none" stroke="#1e1e1e" stroke-width="1"/><path d="M374.6,92 h10.6" stroke="#1e1e1e" stroke-width="2"/><path d="M391.8,91.6 l8.2,8.2 M400.0,91.6 l-8.2,8.2" stroke="#1e1e1e" stroke-width="1.5"/><rect x="408" y="87" width="1" height="19" fill="#d5d6e2"/><rect x="432" y="91" width="5" height="17" fill="url(#dotsg)"/><rect x="490" y="90" width="1" height="19.6" fill="#c9cde0"/><rect x="562" y="90" width="1" height="19.6" fill="#c9cde0"/><rect x="590" y="90" width="1" height="19.6" fill="#c9cde0"/><rect x="739" y="90" width="1" height="19.6" fill="#c9cde0"/><rect x="1072" y="90" width="1" height="19.6" fill="#c9cde0"/><rect x="1223" y="90" width="1" height="19.6" fill="#c9cde0"/><rect x="494.5" y="88.5" width="21" height="21" fill="#f4f1f1" stroke="#3b97ff" stroke-width="1"/><rect x="627.5" y="88.5" width="21" height="21" fill="#f4f1f1" stroke="#3b97ff" stroke-width="1"/><circle cx="454.1" cy="97.8" r="5.1" fill="#f4f4f6" stroke="#2e2e2e" stroke-width="1.9"/><path d="M458.0,101.7 L461.5,105.1" stroke="#2e2e2e" stroke-width="2" stroke-linecap="round"/><path d="M450.4,97.8 l3.6,-3.2 v2 h3.6 v2.4 h-3.6 v2 z" fill="#d9a30a"/><circle cx="476" cy="97.8" r="5.1" fill="#f4f4f6" stroke="#909090" stroke-width="1.9"/><path d="M479.9,101.7 L483.4,105.1" stroke="#909090" stroke-width="2" stroke-linecap="round"/><path d="M479.6,97.8 l-3.6,-3.2 v2 h-3.4 v2.4 h3.4 v2 z" fill="#c4c4c4"/><path d="M505,92.10000000000001 L511.1,95.45 L505,98.80000000000001 L498.9,95.45 Z" fill="#d2d2d2"/><path d="M498.9,95.45 L505,98.80000000000001 V104.7 L498.9,101.35000000000001 Z" fill="#6e6e6e"/><path d="M511.1,95.45 L505,98.80000000000001 V104.7 L511.1,101.35000000000001 Z" fill="#a2a2a2"/><path d="M505,92.10000000000001 L511.1,95.45 V101.35000000000001 L505,104.7 L498.9,101.35000000000001 V95.45 Z M498.9,95.45 L505,98.80000000000001 L511.1,95.45 M505,98.80000000000001 V104.7" fill="none" stroke="#303030" stroke-width="1.2" stroke-linejoin="round"/><path d="M526.9,92.60000000000001 L533.0,95.95 L526.9,99.30000000000001 L520.8,95.95 Z" fill="#d2d2d2"/><path d="M520.8,95.95 L526.9,99.30000000000001 V105.2 L520.8,101.85000000000001 Z" fill="#6e6e6e"/><path d="M533.0,95.95 L526.9,99.30000000000001 V105.2 L533.0,101.85000000000001 Z" fill="#a2a2a2"/><path d="M548.5,93.2 l3,-1.2 l4.4,2.6 v3.2 l-3,1 l-4.4,-2.4 z" fill="#f4f4f4" stroke="#303030" stroke-width="1.1"/><path d="M548.5,93.2 l4.4,2.6 v3 M552.9,95.8 l3,-1.2" fill="none" stroke="#303030" stroke-width="1"/><path d="M542.2,99.6 l3.4,-1.2 l5,2.2 v3.2 l-3.4,1.2 l-5,-2.2 z" fill="#e0a810" stroke="#303030" stroke-width="1.1"/><path d="M542.2,99.6 l5,2.2 v3.2 M547.2,101.8 l3.4,-1.2" fill="none" stroke="#303030" stroke-width="1"/><path d="M543.4,95.6 q0.6,-2.2 2.6,-2.8 M554.8,101.6 q-0.4,2 -2.2,2.8" fill="none" stroke="#555" stroke-width="1"/><path d="M545.2,91.8 l1.8,1 l-1.6,1.2 z M553.4,105.2 l-1.8,-0.8 l1.6,-1.2 z" fill="#555"/><rect x="570.6" y="93" width="4.6" height="4.6" fill="none" stroke="#8a8a8a" stroke-width="1.1"/><path d="M577,93.8 l3.6,3.6 M581,94.6 v3.2 h-3.2" fill="none" stroke="#c8c8c8" stroke-width="1.1"/><rect x="577.6" y="99.8" width="6" height="5.8" fill="none" stroke="#8a8a8a" stroke-width="1.1"/><path d="M580.6,99.8 v5.8 M577.6,102.7 h6" stroke="#8a8a8a" stroke-width="1.1"/><ellipse cx="604.9" cy="99.3" rx="6.8" ry="2.9" fill="none" stroke="#2e2e2e" stroke-width="1.2"/><path d="M605,92.2 v6.4" stroke="#1a1a1a" stroke-width="1.8"/><path d="M604.2,99.8 l4,2.8 l-4,3.2 z" fill="#e0a810"/><path d="M618.4,97.2 h6.4 l-3.2,3.2 z" fill="#777"/><path d="M637.9,92.2 l3,3.4 h-6 z M637.9,105.9 l3,-3.4 h-6 z M631.0,99 l3.4,-3 v6 z M644.9,99 l-3.4,-3 v6 z" fill="#e0a810"/><rect x="637.1" y="96" width="1.6" height="1.6" fill="#222"/><rect x="637.1" y="100.6" width="1.6" height="1.6" fill="#222"/><rect x="634.6999999999999" y="98.2" width="1.6" height="1.6" fill="#222"/><rect x="639.5" y="98.2" width="1.6" height="1.6" fill="#222"/><circle cx="659.2" cy="97.9" r="5.1" fill="#f4f4f6" stroke="#2e2e2e" stroke-width="1.9"/><path d="M663.1,101.80000000000001 L666.6,105.2" stroke="#2e2e2e" stroke-width="2" stroke-linecap="round"/><path d="M659.2,93.8 l2.4,2.8 h-4.8 z M659.2,102 l2.4,-2.8 h-4.8 z" fill="#e0a810"/><circle cx="680.9" cy="97.9" r="5.1" fill="#f4f4f6" stroke="#2e2e2e" stroke-width="1.9"/><path d="M684.8,101.80000000000001 L688.3,105.2" stroke="#2e2e2e" stroke-width="2" stroke-linecap="round"/><path d="M677.6,97.9 h6.6 M680.9,94.6 v6.6" stroke="#e0a810" stroke-width="2.2"/><circle cx="703.2" cy="97.9" r="5.1" fill="#f4f4f6" stroke="#2e2e2e" stroke-width="1.9"/><path d="M707.1,101.80000000000001 L710.6,105.2" stroke="#2e2e2e" stroke-width="2" stroke-linecap="round"/><path d="M703.2,94.6 l3,1.4 v3.4 l-3,1.6 l-3,-1.6 v-3.4 z" fill="#5aa0f0" stroke="#445" stroke-width="0.7"/><path d="M700.2,96 l3,1.5 l3,-1.5 M703.2,97.5 v3.5" fill="none" stroke="#eef" stroke-width="0.7"/><circle cx="725" cy="97.9" r="5.1" fill="#f4f4f6" stroke="#2e2e2e" stroke-width="1.9"/><path d="M728.9,101.80000000000001 L732.4,105.2" stroke="#2e2e2e" stroke-width="2" stroke-linecap="round"/><path d="M725,94.6 l3,1.4 v3.4 l-3,1.6 l-3,-1.6 v-3.4 z" fill="#e8e8e8" stroke="#445" stroke-width="0.7"/><path d="M722,96 l3,1.5 v3.5 l-3,-1.6 z" fill="#18c828"/><path d="M728,96 l-3,1.5 v3.5 l3,-1.6 z" fill="#4a90e8"/><rect x="786" y="92.2" width="6" height="5.8" fill="#f00"/><path d="M790.6,94.6 l8.4,3.2 l-3.2,1.4 l3.4,4.4 l-1.6,1.2 l-3.4,-4.4 l-2,2.6 z" fill="#3a3a3a"/><path d="M836,97.2 h6 l-3,3.2 z" fill="#777"/><g fill="none" stroke="#7c7c7c" stroke-width="1.2"><path d="M853.2,97.8 V92.4 H860"/><circle cx="856.8" cy="95.4" r="1.2"/><path d="M857.3,96.6 V98.4"/><path d="M861.6,97.8 V92.4 H867.9 M864.7,98.4 V95.6 H867.9"/><path d="M853.2,106.6 V100.7 H860 M856.5,106.6 V103.5 H860.3"/></g><rect x="862.2" y="93" width="5.7" height="2" fill="#b4b4b4"/><path d="M853.8,101.3 h4.2 l-4.2,3.4 z" fill="#b4b4b4"/><path d="M863,101.4 l3.2,1.5 l-1.2,0.5 l1.4,2.2 l-0.8,0.5 l-1.4,-2.2 l-0.9,1 z" fill="#9a9a9a"/><path d="M876.8000000000001,93.0 h8.6 l4.4,3.8 v8.8 h-8.8 l-4.2,-3.8 z" fill="#f4f4f6" stroke="#868686" stroke-width="1.3" stroke-linejoin="round"/><path d="M876.8000000000001,93.0 l4.2,3.8 h8.8 M881.0,96.8 v8.8" fill="none" stroke="#868686" stroke-width="1.3"/><path d="M883.8000000000001,99.19999999999999 l3.6,1.6 l-1.4,0.6 l1.4,2 l-0.8,0.6 l-1.4,-2 l-1,1.2 z" fill="#9a9a9a"/><circle cx="879.6" cy="95.19999999999999" r="1.2" fill="#f4f4f6" stroke="#868686" stroke-width="0.9"/><path d="M898.6,93.0 h8.6 l4.4,3.8 v8.8 h-8.8 l-4.2,-3.8 z" fill="#f4f4f6" stroke="#868686" stroke-width="1.3" stroke-linejoin="round"/><path d="M898.6,93.0 h3 l4.2,3.8 h-3 z" fill="#b8b8b8"/><path d="M898.6,93.0 l4.2,3.8 h8.8 M902.8,96.8 v8.8" fill="none" stroke="#868686" stroke-width="1.3"/><path d="M905.6,99.19999999999999 l3.6,1.6 l-1.4,0.6 l1.4,2 l-0.8,0.6 l-1.4,-2 l-1,1.2 z" fill="#9a9a9a"/><path d="M920.6,93.0 h8.6 l4.4,3.8 v8.8 h-8.8 l-4.2,-3.8 z" fill="#f4f4f6" stroke="#868686" stroke-width="1.3" stroke-linejoin="round"/><path d="M920.6,93.0 h8.6 l4.4,3.8 h-8.8 z" fill="#c4c4c4"/><path d="M920.6,93.0 l4.2,3.8 h8.8 M924.8,96.8 v8.8" fill="none" stroke="#868686" stroke-width="1.3"/><path d="M927.6,99.19999999999999 l3.6,1.6 l-1.4,0.6 l1.4,2 l-0.8,0.6 l-1.4,-2 l-1,1.2 z" fill="#9a9a9a"/><path d="M942.9,93.0 h8.6 l4.4,3.8 v8.8 h-8.8 l-4.2,-3.8 z" fill="#c8c8c8" stroke="#868686" stroke-width="1.3" stroke-linejoin="round"/><rect x="947.0999999999999" y="96.8" width="8.8" height="8.8" fill="#bdbdbd"/><path d="M942.9,93.0 l4.2,3.8 h8.8 M947.0999999999999,96.8 v8.8" fill="none" stroke="#868686" stroke-width="1.3"/><path d="M949.9,99.19999999999999 l3.6,1.6 l-1.4,0.6 l1.4,2 l-0.8,0.6 l-1.4,-2 l-1,1.2 z" fill="#9a9a9a"/><path d="M964.7,93.0 h8.6 l4.4,3.8 v8.8 h-8.8 l-4.2,-3.8 z" fill="#fff" stroke="#303030" stroke-width="1.2" stroke-linejoin="round"/><path d="M971.8000000000001,96.8 v8.8 M974.8000000000001,96.8 v8.8 M968.9,99.8 h8.8 M968.9,102.69999999999999 h8.8" stroke="#4a94ff" stroke-width="0.9" fill="none"/><path d="M966.8000000000001,95.0 v8.7 M964.7,96.0 l4.2,3.8 M964.7,99.0 l4.2,3.8 M967.7,93.0 l4.3,3.8 M970.7,93.0 l4.3,3.8 M966.8000000000001,94.89999999999999 h8.7" stroke="#5a9cff" stroke-width="0.7" fill="none"/><path d="M964.7,93.0 l4.2,3.8 h8.8 M968.9,96.8 v8.8" fill="none" stroke="#303030" stroke-width="1.1"/><rect x="967.1" y="94.1" width="2.6" height="1.4" fill="#10d020"/><path d="M971.9,99.39999999999999 l3.4,1.5 l-1.3,0.6 l1.3,1.9 l-0.8,0.5 l-1.3,-1.9 l-0.9,1.1 z" fill="#303030"/><path d="M986.8000000000001,93.0 h8.6 l4.4,3.8 v8.8 h-8.8 l-4.2,-3.8 z" fill="#fff" stroke="#303030" stroke-width="1.2" stroke-linejoin="round"/><path d="M993.9000000000001,96.8 v8.8 M996.9000000000001,96.8 v8.8 M991.0,99.8 h8.8 M991.0,102.69999999999999 h8.8" stroke="#4a94ff" stroke-width="0.9" fill="none"/><path d="M988.9000000000001,95.0 v8.7 M986.8000000000001,96.0 l4.2,3.8 M986.8000000000001,99.0 l4.2,3.8 M989.8000000000001,93.0 l4.3,3.8 M992.8000000000001,93.0 l4.3,3.8 M988.9000000000001,94.89999999999999 h8.7" stroke="#5a9cff" stroke-width="0.7" fill="none"/><path d="M986.8000000000001,93.0 l4.2,3.8 h8.8 M991.0,96.8 v8.8" fill="none" stroke="#303030" stroke-width="1.1"/><path d="M988.8000000000001,94.1 h2 M991.8000000000001,94.1 h2 M990.8000000000001,95.69999999999999 h2 M994.0,95.69999999999999 h2" stroke="#10d020" stroke-width="1.3"/><path d="M994.0,99.39999999999999 l3.4,1.5 l-1.3,0.6 l1.3,1.9 l-0.8,0.5 l-1.3,-1.9 l-0.9,1.1 z" fill="#303030"/><path d="M1008.9,93.0 h8.6 l4.4,3.8 v8.8 h-8.8 l-4.2,-3.8 z" fill="#fff" stroke="#303030" stroke-width="1.2" stroke-linejoin="round"/><path d="M1016.0,96.8 v8.8 M1019.0,96.8 v8.8 M1013.0999999999999,99.8 h8.8 M1013.0999999999999,102.69999999999999 h8.8" stroke="#4a94ff" stroke-width="0.9" fill="none"/><path d="M1011.0,95.0 v8.7 M1008.9,96.0 l4.2,3.8 M1008.9,99.0 l4.2,3.8 M1011.9,93.0 l4.3,3.8 M1014.9,93.0 l4.3,3.8 M1011.0,94.89999999999999 h8.7" stroke="#5a9cff" stroke-width="0.7" fill="none"/><path d="M1008.9,93.0 l4.2,3.8 h8.8 M1013.0999999999999,96.8 v8.8" fill="none" stroke="#303030" stroke-width="1.1"/><path d="M1013.6999999999999,97.6 h3.8 v4.6 h-3.8 z" fill="#10d020"/><path d="M1011.3,95.8 l1.6,1.4 v3.4 l-1.6,-1.4 z" fill="#10d020"/><path d="M1015.6999999999999,97.6 v4.6 M1013.6999999999999,99.89999999999999 h3.8" stroke="#0a5a10" stroke-width="0.6"/><path d="M1016.0999999999999,99.39999999999999 l3.4,1.5 l-1.3,0.6 l1.3,1.9 l-0.8,0.5 l-1.3,-1.9 l-0.9,1.1 z" fill="#303030"/><path d="M1035,99 l3.6,1.8 l-1.4,0.6 l1.8,3 l-0.9,0.6 l-1.8,-3 l-1.1,1.1 z" fill="#c2c2c2"/><path d="M1052.4,93 h10.4 l2.8,2.7 l-2.8,2.7 h-10.4 z" fill="#f8f8f8" stroke="#303030" stroke-width="1.1"/><path d="M1054.6,94.4 v2.6" stroke="#303030" stroke-width="0.9"/><ellipse cx="1057.6" cy="95.7" rx="1.1" ry="1.3" fill="none" stroke="#303030" stroke-width="0.8"/><ellipse cx="1061" cy="95.7" rx="1.1" ry="1.3" fill="none" stroke="#303030" stroke-width="0.8"/><path d="M1056.4,98 l4.2,1.6 l-1.5,0.8 l2.2,3.6 l-0.9,0.6 l-2.2,-3.6 l-1.2,1.2 z" fill="#d49a08"/><rect x="1080.8" y="92.8" width="12.6" height="12.6" fill="#e9b942" stroke="#3c3c3c" stroke-width="1.2"/><path d="M1083,95.2 h8.2 M1085.6,94.2 h3" stroke="#3c3c3c" stroke-width="1" fill="none"/><path d="M1150.9,97.2 h6 l-3,3.2 z" fill="#777"/><path d="M1285.2,97.2 h6 l-3,3.2 z" fill="#777"/><path d="M1369.6,97.2 h6 l-3,3.2 z" fill="#777"/><path d="M1448.6,97.2 h6 l-3,3.2 z" fill="#777"/><path d="M1231.2,97.4 l7,-3.4 l6.2,2.6 v5.8 l-6.6,3.4 l-6.6,-3 z" fill="#fafafa" stroke="#303030" stroke-width="1.1" stroke-linejoin="round"/><path d="M1231.2,97.4 l6.6,3 l6.6,-3.8 M1237.8,100.4 v5.4" fill="none" stroke="#303030" stroke-width="1"/><path d="M1231.8,98.2 l5.6,2.6 v4.4 l-5.6,-2.6 z" fill="#18c828"/><path d="M1238.2,93.4 v3 M1236.7,94.9 h3" stroke="#d49a08" stroke-width="1"/><path d="M1311,92.4 a2.9,2.9 0 0 1 2.9,2.9 c0,2 -2.9,5.6 -2.9,5.6 c0,0 -2.9,-3.6 -2.9,-5.6 a2.9,2.9 0 0 1 2.9,-2.9 z" fill="#e0a810"/><circle cx="1311" cy="95.3" r="1" fill="#fff"/><path d="M1304.8,105.4 l2.4,-2.4 h7.6 l2.4,2.4 z" fill="none" stroke="#555" stroke-width="1"/><path d="M1392.6,96.2 l2,-2 h7 v8 l-2,2.2 h-7 z" fill="#18c828" stroke="#303030" stroke-width="1.1" stroke-linejoin="round"/><path d="M1392.6,96.2 h7 v8.2 M1399.6,96.2 l2,-2" fill="none" stroke="#303030" stroke-width="1"/><path d="M1387.6,98.2 h3.8 M1389.8,96.6 l1.8,1.6 l-1.8,1.6" stroke="#d49a08" stroke-width="1" fill="none"/><path d="M1464.8,102.8 h7.2 l-3.6,3.6 z" fill="#1e1e1e"/><rect x="4.5" y="108.5" width="99" height="22" fill="#fff" stroke="#c3c6dc"/><rect x="104.5" y="108.5" width="89" height="22" fill="#fff" stroke="#c3c6dc"/><path d="M92.4,117.8 h7.6 l-3.8,3.8 z" fill="#666"/><path d="M199.6,116 l5.4,5 l5.4,-5" fill="none" stroke="#d2a018" stroke-width="1.8"/><path d="M218,122.8 h6 l-3,3 z" fill="#1e1e1e"/></svg>
<span style="left:-13.50px;top:90.00px;font-size:12px;color:#333;letter-spacing:0.411px;">Outline</span>
<span style="left:7.10px;top:114.00px;font-size:12px;color:#1a1a1a;letter-spacing:0.128px;">Name</span>
<span style="left:107.70px;top:114.00px;font-size:12px;color:#a9a9a9;letter-spacing:-0.122px;">Search Outline</span>
<span style="left:746.50px;top:93.00px;font-size:12px;color:#1a1a1a;letter-spacing:-0.272px;">Select</span>
<span style="left:802.80px;top:93.00px;font-size:12px;color:#1a1a1a;letter-spacing:0.590px;">Mode</span>
<span style="left:1097.20px;top:93.00px;font-size:12px;color:#1a1a1a;letter-spacing:0.078px;">Clipboard</span>
<span style="left:1168.70px;top:93.00px;font-size:12px;color:#1a1a1a;letter-spacing:0.145px;">[ Empty ]</span>
<span style="left:1247.80px;top:93.00px;font-size:12px;color:#1a1a1a;letter-spacing:-0.272px;">Extend</span>
<span style="left:1320.90px;top:93.00px;font-size:12px;color:#1a1a1a;letter-spacing:-0.463px;">Select By</span>
<span style="left:1405.10px;top:93.00px;font-size:12px;color:#1a1a1a;letter-spacing:-0.005px;">Convert</span>
<span style="left:1029.00px;top:93.00px;font-size:5.5px;color:#c0c0c0;letter-spacing:0.391px;">X.Y.Z</span>
<div style="left:0px;top:133px;width:409px;height:551px;background:#fff;"></div>
<svg style="left:0px;top:132px;" width="409" height="552" viewBox="0 132 409 552"><defs><linearGradient id="rb" x1="0" y1="0" x2="1" y2="0"><stop offset="0" stop-color="#1c50e8"/><stop offset="0.25" stop-color="#20d8e8"/><stop offset="0.5" stop-color="#30e030"/><stop offset="0.75" stop-color="#f0e820"/><stop offset="1" stop-color="#f02818"/></linearGradient></defs><path d="M0,157.5 H9" stroke="#7f7f7f" stroke-width="1" stroke-dasharray="1 1" shape-rendering="crispEdges"/><path d="M21.5,165 V361.5" stroke="#7f7f7f" stroke-width="1" stroke-dasharray="1 1" shape-rendering="crispEdges"/><path d="M27,173.5 H36" stroke="#7f7f7f" stroke-width="1" stroke-dasharray="1 1" shape-rendering="crispEdges"/><rect x="17.5" y="169.5" width="8" height="8" fill="#fff" stroke="#8e8e8e" stroke-width="1" shape-rendering="crispEdges"/><path d="M19.0,173.5 h5" stroke="#000" stroke-width="1" shape-rendering="crispEdges"/><path d="M21.5,171.0 v5" stroke="#000" stroke-width="1" shape-rendering="crispEdges"/><path d="M27,189.5 H36" stroke="#7f7f7f" stroke-width="1" stroke-dasharray="1 1" shape-rendering="crispEdges"/><rect x="17.5" y="185.5" width="8" height="8" fill="#fff" stroke="#8e8e8e" stroke-width="1" shape-rendering="crispEdges"/><path d="M19.0,189.5 h5" stroke="#000" stroke-width="1" shape-rendering="crispEdges"/><path d="M21.5,187.0 v5" stroke="#000" stroke-width="1" shape-rendering="crispEdges"/><path d="M27,205.5 H36" stroke="#7f7f7f" stroke-width="1" stroke-dasharray="1 1" shape-rendering="crispEdges"/><rect x="17.5" y="201.5" width="8" height="8" fill="#fff" stroke="#8e8e8e" stroke-width="1" shape-rendering="crispEdges"/><path d="M19.0,205.5 h5" stroke="#000" stroke-width="1" shape-rendering="crispEdges"/><path d="M27,269.5 H36" stroke="#7f7f7f" stroke-width="1" stroke-dasharray="1 1" shape-rendering="crispEdges"/><rect x="17.5" y="265.5" width="8" height="8" fill="#fff" stroke="#8e8e8e" stroke-width="1" shape-rendering="crispEdges"/><path d="M19.0,269.5 h5" stroke="#000" stroke-width="1" shape-rendering="crispEdges"/><path d="M21.5,267.0 v5" stroke="#000" stroke-width="1" shape-rendering="crispEdges"/><path d="M27,285.5 H36" stroke="#7f7f7f" stroke-width="1" stroke-dasharray="1 1" shape-rendering="crispEdges"/><rect x="17.5" y="281.5" width="8" height="8" fill="#fff" stroke="#8e8e8e" stroke-width="1" shape-rendering="crispEdges"/><path d="M19.0,285.5 h5" stroke="#000" stroke-width="1" shape-rendering="crispEdges"/><path d="M21.5,283.0 v5" stroke="#000" stroke-width="1" shape-rendering="crispEdges"/><path d="M27,301.5 H36" stroke="#7f7f7f" stroke-width="1" stroke-dasharray="1 1" shape-rendering="crispEdges"/><rect x="17.5" y="297.5" width="8" height="8" fill="#fff" stroke="#8e8e8e" stroke-width="1" shape-rendering="crispEdges"/><path d="M19.0,301.5 h5" stroke="#000" stroke-width="1" shape-rendering="crispEdges"/><path d="M21.5,299.0 v5" stroke="#000" stroke-width="1" shape-rendering="crispEdges"/><path d="M27,317.5 H36" stroke="#7f7f7f" stroke-width="1" stroke-dasharray="1 1" shape-rendering="crispEdges"/><rect x="17.5" y="313.5" width="8" height="8" fill="#fff" stroke="#8e8e8e" stroke-width="1" shape-rendering="crispEdges"/><path d="M19.0,317.5 h5" stroke="#000" stroke-width="1" shape-rendering="crispEdges"/><path d="M27,349.5 H36" stroke="#7f7f7f" stroke-width="1" stroke-dasharray="1 1" shape-rendering="crispEdges"/><rect x="17.5" y="345.5" width="8" height="8" fill="#fff" stroke="#8e8e8e" stroke-width="1" shape-rendering="crispEdges"/><path d="M19.0,349.5 h5" stroke="#000" stroke-width="1" shape-rendering="crispEdges"/><path d="M21.5,347.0 v5" stroke="#000" stroke-width="1" shape-rendering="crispEdges"/><path d="M27,365.5 H36" stroke="#7f7f7f" stroke-width="1" stroke-dasharray="1 1" shape-rendering="crispEdges"/><rect x="17.5" y="361.5" width="8" height="8" fill="#fff" stroke="#8e8e8e" stroke-width="1" shape-rendering="crispEdges"/><path d="M19.0,365.5 h5" stroke="#000" stroke-width="1" shape-rendering="crispEdges"/><path d="M48.5,212.5 V253.5" stroke="#7f7f7f" stroke-width="1" stroke-dasharray="1 1" shape-rendering="crispEdges"/><path d="M49,221.5 H63" stroke="#7f7f7f" stroke-width="1" stroke-dasharray="1 1" shape-rendering="crispEdges"/><path d="M49,237.5 H63" stroke="#7f7f7f" stroke-width="1" stroke-dasharray="1 1" shape-rendering="crispEdges"/><path d="M49,253.5 H63" stroke="#7f7f7f" stroke-width="1" stroke-dasharray="1 1" shape-rendering="crispEdges"/><path d="M48.5,324.5 V333.5" stroke="#7f7f7f" stroke-width="1" stroke-dasharray="1 1" shape-rendering="crispEdges"/><path d="M49,333.5 H63" stroke="#7f7f7f" stroke-width="1" stroke-dasharray="1 1" shape-rendering="crispEdges"/><path d="M48.5,372.5 V425.5" stroke="#7f7f7f" stroke-width="1" stroke-dasharray="1 1" shape-rendering="crispEdges"/><path d="M49,381.5 H63" stroke="#7f7f7f" stroke-width="1" stroke-dasharray="1 1" shape-rendering="crispEdges"/><path d="M49,397.5 H63" stroke="#7f7f7f" stroke-width="1" stroke-dasharray="1 1" shape-rendering="crispEdges"/><path d="M49,413.5 H63" stroke="#7f7f7f" stroke-width="1" stroke-dasharray="1 1" shape-rendering="crispEdges"/><path d="M54,429.5 H63" stroke="#7f7f7f" stroke-width="1" stroke-dasharray="1 1" shape-rendering="crispEdges"/><rect x="44.5" y="425.5" width="8" height="8" fill="#fff" stroke="#8e8e8e" stroke-width="1" shape-rendering="crispEdges"/><path d="M46.0,429.5 h5" stroke="#000" stroke-width="1" shape-rendering="crispEdges"/><path d="M75.5,436.5 V489.5" stroke="#7f7f7f" stroke-width="1" stroke-dasharray="1 1" shape-rendering="crispEdges"/><path d="M76,445.5 H90" stroke="#7f7f7f" stroke-width="1" stroke-dasharray="1 1" shape-rendering="crispEdges"/><path d="M76,461.5 H90" stroke="#7f7f7f" stroke-width="1" stroke-dasharray="1 1" shape-rendering="crispEdges"/><path d="M76,477.5 H90" stroke="#7f7f7f" stroke-width="1" stroke-dasharray="1 1" shape-rendering="crispEdges"/><path d="M81,493.5 H90" stroke="#7f7f7f" stroke-width="1" stroke-dasharray="1 1" shape-rendering="crispEdges"/><rect x="71.5" y="489.5" width="8" height="8" fill="#fff" stroke="#8e8e8e" stroke-width="1" shape-rendering="crispEdges"/><path d="M73.0,493.5 h5" stroke="#000" stroke-width="1" shape-rendering="crispEdges"/><path d="M102.5,500.5 V509.5" stroke="#7f7f7f" stroke-width="1" stroke-dasharray="1 1" shape-rendering="crispEdges"/><path d="M103,509.5 H117" stroke="#7f7f7f" stroke-width="1" stroke-dasharray="1 1" shape-rendering="crispEdges"/><path d="M36.3,177.7 l2.5,2.8 l5.2,-7.6" fill="none" stroke="#0a8a12" stroke-width="1.7"/><path d="M36.3,193.7 l2.5,2.8 l5.2,-7.6" fill="none" stroke="#0a8a12" stroke-width="1.7"/><path d="M36.3,209.7 l2.5,2.8 l5.2,-7.6" fill="none" stroke="#0a8a12" stroke-width="1.7"/><path d="M36.3,273.7 l2.5,2.8 l5.2,-7.6" fill="none" stroke="#0a8a12" stroke-width="1.7"/><path d="M36.3,289.7 l2.5,2.8 l5.2,-7.6" fill="none" stroke="#0a8a12" stroke-width="1.7"/><path d="M36.3,305.7 l2.5,2.8 l5.2,-7.6" fill="none" stroke="#0a8a12" stroke-width="1.7"/><path d="M36.3,321.7 l2.5,2.8 l5.2,-7.6" fill="none" stroke="#0a8a12" stroke-width="1.7"/><path d="M36.3,369.7 l2.5,2.8 l5.2,-7.6" fill="none" stroke="#0a8a12" stroke-width="1.7"/><path d="M63.3,225.7 l2.5,2.8 l5.2,-7.6" fill="none" stroke="#0a8a12" stroke-width="1.7"/><path d="M63.3,241.7 l2.5,2.8 l5.2,-7.6" fill="none" stroke="#0a8a12" stroke-width="1.7"/><path d="M63.3,257.7 l2.5,2.8 l5.2,-7.6" fill="none" stroke="#0a8a12" stroke-width="1.7"/><path d="M63.3,337.7 l2.5,2.8 l5.2,-7.6" fill="none" stroke="#0a8a12" stroke-width="1.7"/><path d="M63.3,385.7 l2.5,2.8 l5.2,-7.6" fill="none" stroke="#0a8a12" stroke-width="1.7"/><path d="M63.3,401.7 l2.5,2.8 l5.2,-7.6" fill="none" stroke="#0a8a12" stroke-width="1.7"/><path d="M63.3,417.7 l2.5,2.8 l5.2,-7.6" fill="none" stroke="#0a8a12" stroke-width="1.7"/><path d="M63.3,433.7 l2.5,2.8 l5.2,-7.6" fill="none" stroke="#0a8a12" stroke-width="1.7"/><path d="M90.3,449.7 l2.5,2.8 l5.2,-7.6" fill="none" stroke="#0a8a12" stroke-width="1.7"/><path d="M90.3,465.7 l2.5,2.8 l5.2,-7.6" fill="none" stroke="#0a8a12" stroke-width="1.7"/><path d="M90.3,481.7 l2.5,2.8 l5.2,-7.6" fill="none" stroke="#0a8a12" stroke-width="1.7"/><path d="M90.3,497.7 l2.5,2.8 l5.2,-7.6" fill="none" stroke="#0a8a12" stroke-width="1.7"/><path d="M117.3,513.7 l2.5,2.8 l5.2,-7.6" fill="none" stroke="#0a8a12" stroke-width="1.7"/><rect x="-3" y="134.5" width="7.5" height="13" fill="#c9950c" stroke="#4a3a08" stroke-width="0.9"/><path d="M19.6,152.7 v-2.4 h5 l1,1 h4.8 v1.6 z" fill="#c9950c" stroke="#6a5210" stroke-width="0.6"/><path d="M18.3,152.9 h13.6 l-0.8,10 h-12 z" fill="#fbf2a2" stroke="#3c3c32" stroke-width="1" stroke-linejoin="round"/><path d="M18,149.5 m7,6.4 l3,1.2 v3.2 l-3,1.4 l-3,-1.4 v-3.2 z" fill="#8ab8f0" stroke="#456" stroke-width="0.7"/><path d="M18,149.5 m4,7.6 l3,1.3 l3,-1.3 M7,8.9" fill="none" stroke="#dde" stroke-width="0.7"/><path d="M45.4,169.1 l4.4,-2.2 l4.4,1.6 l4.6,2 v5.4 l-4.4,2.2 l-4.6,-1.8 l-4.4,-2 z" fill="#bcd8fa" stroke="#667" stroke-width="1" stroke-linejoin="round"/><path d="M54.4,172.5 l4.4,-2 v5.4 l-4.4,2.2 z" fill="#5a9cf0"/><path d="M45.4,169.1 l4.4,1.6 l4.4,-2.2 M49.8,170.7 v5.4 M49.8,170.7 l4.6,1.9 l4.4,-2 M54.4,172.6 v5.5" fill="none" stroke="#667" stroke-width="0.9"/><path d="M46.6,184.7 v-2.4 h5 l1,1 h4.8 v1.6 z" fill="#c9950c" stroke="#6a5210" stroke-width="0.6"/><path d="M45.3,184.9 h13.6 l-0.8,10 h-12 z" fill="#fbf2a2" stroke="#3c3c32" stroke-width="1" stroke-linejoin="round"/><path d="M45,181.5 m5.4,6 l3.4,-1 l3,4.4 l-2.6,2.6 z" fill="#f4b088" stroke="#a08060" stroke-width="0.6"/><path d="M51.8,206.0 V201.0" stroke="#18d818" stroke-width="1.4"/><path d="M49.599999999999994,201.6 l2.2,-3.2 l2.2,3.2 z" fill="#18e018"/><path d="M51.8,206.0 L56.8,209.2" stroke="#f01818" stroke-width="1.4"/><path d="M58.8,210.6 l-4,-0.4 l1.8,-2.6 z" fill="#f01818"/><path d="M51.8,206.0 L46.8,209.2" stroke="#5a98f0" stroke-width="1.4"/><path d="M44.8,210.6 l4,-0.4 l-1.8,-2.6 z" fill="#6aa4f4"/><path d="M46.199999999999996,201.4 l3.6,3" stroke="#777" stroke-width="1.1"/><path d="M50.599999999999994,205.2 l-3,-0.6 l1.6,-1.8 z" fill="#555"/><path d="M57.4,201.4 l-3.6,3" stroke="#777" stroke-width="1.1"/><path d="M53.0,205.2 l3,-0.6 l-1.6,-1.8 z" fill="#555"/><path d="M51.8,208.4 v3.6" stroke="#8a8a8a" stroke-width="1.6" stroke-dasharray="1.6 0.8"/><rect x="50.8" y="205.0" width="2" height="2" fill="#333"/><path d="M78.8,222.0 V217.0" stroke="#18d818" stroke-width="1.4"/><path d="M76.6,217.6 l2.2,-3.2 l2.2,3.2 z" fill="#18e018"/><path d="M78.8,222.0 L83.8,225.2" stroke="#f01818" stroke-width="1.4"/><path d="M85.8,226.6 l-4,-0.4 l1.8,-2.6 z" fill="#f01818"/><path d="M78.8,222.0 L73.8,225.2" stroke="#5a98f0" stroke-width="1.4"/><path d="M71.8,226.6 l4,-0.4 l-1.8,-2.6 z" fill="#6aa4f4"/><path d="M73.2,217.4 l3.6,3" stroke="#777" stroke-width="1.1"/><path d="M77.6,221.2 l-3,-0.6 l1.6,-1.8 z" fill="#555"/><path d="M84.39999999999999,217.4 l-3.6,3" stroke="#777" stroke-width="1.1"/><path d="M80.0,221.2 l3,-0.6 l-1.6,-1.8 z" fill="#555"/><path d="M78.8,224.4 v3.6" stroke="#8a8a8a" stroke-width="1.6" stroke-dasharray="1.6 0.8"/><rect x="77.8" y="221.0" width="2" height="2" fill="#333"/><path d="M78.8,238.0 V233.0" stroke="#18d818" stroke-width="1.4"/><path d="M76.6,233.6 l2.2,-3.2 l2.2,3.2 z" fill="#18e018"/><path d="M78.8,238.0 L83.8,241.2" stroke="#f01818" stroke-width="1.4"/><path d="M85.8,242.6 l-4,-0.4 l1.8,-2.6 z" fill="#f01818"/><path d="M78.8,238.0 L73.8,241.2" stroke="#5a98f0" stroke-width="1.4"/><path d="M71.8,242.6 l4,-0.4 l-1.8,-2.6 z" fill="#6aa4f4"/><path d="M73.2,233.4 l3.6,3" stroke="#777" stroke-width="1.1"/><path d="M77.6,237.2 l-3,-0.6 l1.6,-1.8 z" fill="#555"/><path d="M84.39999999999999,233.4 l-3.6,3" stroke="#777" stroke-width="1.1"/><path d="M80.0,237.2 l3,-0.6 l-1.6,-1.8 z" fill="#555"/><path d="M78.8,240.4 v3.6" stroke="#8a8a8a" stroke-width="1.6" stroke-dasharray="1.6 0.8"/><rect x="77.8" y="237.0" width="2" height="2" fill="#333"/><path d="M78.8,254.0 V249.0" stroke="#18d818" stroke-width="1.4"/><path d="M76.6,249.6 l2.2,-3.2 l2.2,3.2 z" fill="#18e018"/><path d="M78.8,254.0 L83.8,257.2" stroke="#f01818" stroke-width="1.4"/><path d="M85.8,258.6 l-4,-0.4 l1.8,-2.6 z" fill="#f01818"/><path d="M78.8,254.0 L73.8,257.2" stroke="#5a98f0" stroke-width="1.4"/><path d="M71.8,258.6 l4,-0.4 l-1.8,-2.6 z" fill="#6aa4f4"/><path d="M73.2,249.4 l3.6,3" stroke="#777" stroke-width="1.1"/><path d="M77.6,253.2 l-3,-0.6 l1.6,-1.8 z" fill="#555"/><path d="M84.39999999999999,249.4 l-3.6,3" stroke="#777" stroke-width="1.1"/><path d="M80.0,253.2 l3,-0.6 l-1.6,-1.8 z" fill="#555"/><path d="M78.8,256.4 v3.6" stroke="#8a8a8a" stroke-width="1.6" stroke-dasharray="1.6 0.8"/><rect x="77.8" y="253.0" width="2" height="2" fill="#333"/><path d="M46.6,264.7 v-2.4 h5 l1,1 h4.8 v1.6 z" fill="#c9950c" stroke="#6a5210" stroke-width="0.6"/><path d="M45.3,264.9 h13.6 l-0.8,10 h-12 z" fill="#fbf2a2" stroke="#3c3c32" stroke-width="1" stroke-linejoin="round"/><path d="M45,261.5 m2.6,10.6 l1.6,-3.6 v3.6 z m4,0 v-4.2 h1.4 v4.2 z m3.2,0 v-3.6 l1.6,3.6 z" fill="#333"/><path d="M46.6,280.7 v-2.4 h5 l1,1 h4.8 v1.6 z" fill="#c9950c" stroke="#6a5210" stroke-width="0.6"/><path d="M45.3,280.9 h13.6 l-0.8,10 h-12 z" fill="#fbf2a2" stroke="#3c3c32" stroke-width="1" stroke-linejoin="round"/><ellipse cx="52" cy="286.1" rx="4" ry="2.8" fill="#e8c050" stroke="#6a5a30" stroke-width="0.7"/><path d="M45.4,297.1 l4.4,-2.2 l4.4,1.6 l4.6,2 v5.4 l-4.4,2.2 l-4.6,-1.8 l-4.4,-2 z" fill="#dfe8f6" stroke="#777" stroke-width="1" stroke-linejoin="round"/><path d="M54.4,300.5 l4.4,-2 v5.4 l-4.4,2.2 z" fill="#cfdcf0"/><path d="M45.4,297.1 l4.4,1.6 l4.4,-2.2 M49.8,298.7 v5.4 M49.8,298.7 l4.6,1.9 l4.4,-2 M54.4,300.6 v5.5" fill="none" stroke="#777" stroke-width="0.9"/><path d="M46.6,312.7 v-2.4 h5 l1,1 h4.8 v1.6 z" fill="#c9950c" stroke="#6a5210" stroke-width="0.6"/><path d="M45.3,312.9 h13.6 l-0.8,10 h-12 z" fill="#fbf2a2" stroke="#3c3c32" stroke-width="1" stroke-linejoin="round"/><path d="M45,309.5 m3.4,5.6 h7.6 v6.6 h-7.6 v-2.4 h3.4 l1.4,-1.6 h-4.8 z" fill="#7ab0ee" stroke="#8aa8d0" stroke-width="0.5"/><path d="M72.6,328.9 l2.6,-2.6 h10.4 v10 l-2.6,2.8 h-10.4 v-4 h4 l1.6,-2 h-5.6 z" fill="#9cc4f4" stroke="#333" stroke-width="1.1" stroke-linejoin="round"/><path d="M72.6,328.9 h10.4 v10.2 M83,328.9 l2.6,-2.6" fill="none" stroke="#333" stroke-width="1"/><path d="M76,335.5 v3 M79.4,329.5 v9 M74,337.1 h9 M78,331.1 h5" stroke="#eef4ff" stroke-width="0.8" stroke-dasharray="1.4 1"/><path d="M49.4,343.5 l3.6,-1.6 l5.6,4 v4 l-3.6,1.6 l-5.6,-4 z" fill="#fff" stroke="#333" stroke-width="1" stroke-linejoin="round"/><path d="M49.4,343.5 l5.6,4 v4 l-5.6,-4 z" fill="#18d028"/><path d="M55,347.5 l3.6,-1.6" stroke="#333" stroke-width="0.9"/><path d="M45.6,352.1 h13 v3 h-13 z" fill="#fff" stroke="#333" stroke-width="1"/><path d="M47.6,344.5 q-2,2.4 -0.6,5.2" fill="none" stroke="#f02020" stroke-width="1.1"/><path d="M46,348.9 l1.6,1.8 l1,-2.2 z" fill="#f02020"/><rect x="55.4" y="352.9" width="1.6" height="1" fill="#e0a810"/><rect x="45" y="357.7" width="14" height="14" fill="#72cc33"/><path d="M47,363.3 h10.4" stroke="#fff" stroke-width="1.4" fill="none"/><path d="M48.2,366.9 l1.9,-3.4 M51.2,366.9 l1.9,-3.4 M54.2,366.9 l1.9,-3.4" stroke="#fff" stroke-width="1.1" fill="none"/><path d="M73.6,376.9 h11.4 v8.4 h-11.4 z M77.4,376.9 v8.4 M81.2,376.9 v8.4" fill="none" stroke="#222" stroke-width="1"/><path d="M72.4,374.4 h3 M73.9,374.4 v2.4 M76.2,374.4 h3 M77.7,374.4 v2.4 M80,374.4 h3 M81.5,374.4 v2.4" stroke="#1818e8" stroke-width="0.9" fill="none"/><path d="M73.2,383.5 q6,-9 12.4,0" fill="none" stroke="#18d828" stroke-width="1.2"/><path d="M72.2,387.5 l1.4,-2.2 l1.4,2.2 z M77.9,387.5 l1.4,-2.2 l1.4,2.2 z M83.6,387.5 l1.4,-2.2 l1.4,2.2 z" fill="#f01818"/><path d="M77,389.6 l4.8,2 v5.6 l-4.8,2.6 l-4.6,-2.4 v-5.6 z" fill="#fff" stroke="#555" stroke-width="1" stroke-linejoin="round"/><path d="M77,394.0 l4.8,-2.4 v5.6 l-4.8,2.6 z" fill="#18d828"/><path d="M72.4,391.8 l4.6,2.2 l4.8,-2.4 M77,394.0 v5.8" fill="none" stroke="#555" stroke-width="0.9"/><path d="M72,389.0 m13,13 l-3.6,-3.2" stroke="#d8a020" stroke-width="1.1"/><path d="M72,389.0 m8.2,8.6 l3,0.4 l-2,2 z" fill="#d8a020"/><path d="M77,405.6 l4.8,2 v5.6 l-4.8,2.6 l-4.6,-2.4 v-5.6 z" fill="#fff" stroke="#555" stroke-width="1" stroke-linejoin="round"/><path d="M77,410.0 l4.8,-2.4 v5.6 l-4.8,2.6 z" fill="#2890f0"/><path d="M72.4,407.8 l4.6,2.2 l4.8,-2.4 M77,410.0 v5.8" fill="none" stroke="#555" stroke-width="0.9"/><path d="M72,405.0 m13.4,10 l-4,2" stroke="#d8a020" stroke-width="1.1"/><path d="M72,405.0 m7.6,13 l2.4,-2.4 l1,2 z" fill="#d8a020"/><path d="M73.6,424.7 v-2.4 h5 l1,1 h4.8 v1.6 z" fill="#c9950c" stroke="#6a5210" stroke-width="0.6"/><path d="M72.3,424.9 h13.6 l-0.8,10 h-12 z" fill="#fbf2a2" stroke="#3c3c32" stroke-width="1" stroke-linejoin="round"/><path d="M72,421.5 m3.6,6.6 l3,-1.2 l4.4,1 v3.8 l-3.2,1.6 l-4.2,-1.4 z" fill="url(#rb)" stroke="#555" stroke-width="0.6"/><path d="M100.6,440.7 v-2.4 h5 l1,1 h4.8 v1.6 z" fill="#c9950c" stroke="#6a5210" stroke-width="0.6"/><path d="M99.3,440.9 h13.6 l-0.8,10 h-12 z" fill="#fbf2a2" stroke="#3c3c32" stroke-width="1" stroke-linejoin="round"/><path d="M99.4,457.1 l4.4,-2.2 l4.4,1.6 l4.6,2 v5.4 l-4.4,2.2 l-4.6,-1.8 l-4.4,-2 z" fill="url(#rb)" stroke="#444" stroke-width="1" stroke-linejoin="round"/><path d="M99.4,457.1 l4.4,1.6 l4.4,-2.2 M103.8,458.7 v5.4 M103.8,458.7 l4.6,1.9 l4.4,-2 M108.4,460.6 v5.5" fill="none" stroke="#444" stroke-width="0.9"/><path d="M99.4,473.1 l4.4,-2.2 l4.4,1.6 l4.6,2 v5.4 l-4.4,2.2 l-4.6,-1.8 l-4.4,-2 z" fill="url(#rb)" stroke="#444" stroke-width="1" stroke-linejoin="round"/><path d="M99.4,473.1 l4.4,1.6 l4.4,-2.2 M103.8,474.7 v5.4 M103.8,474.7 l4.6,1.9 l4.4,-2 M108.4,476.6 v5.5" fill="none" stroke="#444" stroke-width="0.9"/><path d="M100.6,488.7 v-2.4 h5 l1,1 h4.8 v1.6 z" fill="#c9950c" stroke="#6a5210" stroke-width="0.6"/><path d="M99.3,488.9 h13.6 l-0.8,10 h-12 z" fill="#fbf2a2" stroke="#3c3c32" stroke-width="1" stroke-linejoin="round"/><path d="M99,485.5 m3.4,5.6 h7.6 v6.6 h-7.6 v-2.4 h3.4 l1.4,-1.6 h-4.8 z" fill="#7ab0ee" stroke="#8aa8d0" stroke-width="0.5"/><path d="M126.6,504.9 l2.6,-2.6 h10.4 v10 l-2.6,2.8 h-10.4 v-4 h4 l1.6,-2 h-5.6 z" fill="url(#rb)" stroke="#333" stroke-width="1.1" stroke-linejoin="round"/><path d="M126.6,504.9 h10.4 v10.2 M137,504.9 l2.6,-2.6" fill="none" stroke="#333" stroke-width="1"/><rect x="143.5" y="501.0" width="49.5" height="16" fill="#f0f0f0"/></svg>
<span style="left:103.60px;top:443.00px;font-size:9px;color:#2a6ae0;font-weight:bold;font-family:"Liberation Mono",monospace;">i</span>
<span style="left:10.50px;top:136.00px;font-size:11px;color:#000;font-weight:bold;transform:scaleX(1.1617);transform-origin:0 0;">Project*</span>
<span style="left:37.70px;top:152.00px;font-size:11px;color:#000;font-weight:bold;transform:scaleX(1.1018);transform-origin:0 0;">Model (F4)</span>
<span style="left:63.80px;top:168.00px;font-size:11px;color:#000;letter-spacing:-0.042px;">Geometry</span>
<span style="left:63.80px;top:184.00px;font-size:11px;color:#000;letter-spacing:-0.103px;">Materials</span>
<span style="left:63.80px;top:200.00px;font-size:11px;color:#000;letter-spacing:-0.126px;">Coordinate Systems</span>
<span style="left:91.20px;top:216.00px;font-size:11px;color:#000;letter-spacing:-0.209px;">Global Coordinate System</span>
<span style="left:91.20px;top:232.00px;font-size:11px;color:#000;letter-spacing:-0.128px;">Coordinate System</span>
<span style="left:91.20px;top:248.00px;font-size:11px;color:#000;letter-spacing:-0.090px;">Coordinate System 2</span>
<span style="left:63.80px;top:264.00px;font-size:11px;color:#000;letter-spacing:-0.114px;">Symmetry</span>
<span style="left:63.80px;top:280.00px;font-size:11px;color:#000;letter-spacing:-0.116px;">Connections</span>
<span style="left:63.80px;top:296.00px;font-size:11px;color:#000;letter-spacing:-0.402px;">Mesh</span>
<span style="left:63.80px;top:312.00px;font-size:11px;color:#000;letter-spacing:0.133px;">Fracture</span>
<span style="left:91.20px;top:328.00px;font-size:11px;color:#000;letter-spacing:-0.254px;">Pre-Meshed Crack</span>
<span style="left:63.80px;top:344.00px;font-size:11px;color:#000;letter-spacing:-0.292px;">Named Selections</span>
<span style="left:64.50px;top:360.00px;font-size:11px;color:#000;font-weight:bold;transform:scaleX(1.1046);transform-origin:0 0;">Static Structural (F5)</span>
<span style="left:91.20px;top:376.00px;font-size:11px;color:#000;letter-spacing:-0.142px;">Analysis Settings</span>
<span style="left:91.20px;top:392.00px;font-size:11px;color:#000;letter-spacing:-0.204px;">Pressure</span>
<span style="left:91.20px;top:408.00px;font-size:11px;color:#000;letter-spacing:-0.249px;">Displacement</span>
<span style="left:91.70px;top:424.00px;font-size:11px;color:#000;font-weight:bold;transform:scaleX(1.0741);transform-origin:0 0;">Solution (F6)</span>
<span style="left:117.90px;top:440.00px;font-size:11px;color:#000;">Solution Information</span>
<span style="left:117.90px;top:456.00px;font-size:11px;color:#000;letter-spacing:0.043px;">Total Deformation</span>
<span style="left:117.90px;top:472.00px;font-size:11px;color:#000;letter-spacing:-0.126px;">Equivalent Stress</span>
<span style="left:117.90px;top:488.00px;font-size:11px;color:#000;letter-spacing:0.067px;">Fracture Tool</span>
<span style="left:145.00px;top:504.00px;font-size:11px;color:#000;letter-spacing:-0.350px;">SIFS (K1)</span>
<div style="left:0px;top:688px;width:409px;height:1px;background:#d5d6e2;"></div>
<div style="left:408px;top:688px;width:1px;height:20px;background:#d5d6e2;"></div>
<svg style="left:0px;top:688px;" width="409" height="20" viewBox="0 688 409 20"><defs><pattern id="dots2" x="3" y="3" width="4" height="4" patternUnits="userSpaceOnUse"><rect x="0" y="0" width="1" height="1" fill="#a6a6b0"/><rect x="2" y="2" width="1" height="1" fill="#a6a6b0"/></pattern></defs><rect x="99" y="695" width="242" height="5" fill="url(#dots2)"/><path d="M343.6,696 h8.6 l-4.3,4.4 z" fill="#1e1e1e"/><path d="M361.4,692.5 h4.6 M362.0,692.5 v6.6 M365.2,692.5 v6.6 M364.29999999999995,692.5 v6.6 M359.4,699.2 h8.4 M363.59999999999997,699.2 v4.2" stroke="#1e1e1e" stroke-width="1" fill="none"/><rect x="375.1" y="694" width="9.6" height="8" fill="none" stroke="#1e1e1e" stroke-width="1"/><path d="M374.6,694 h10.6" stroke="#1e1e1e" stroke-width="2"/><path d="M391.8,693.6 l8.2,8.2 M400,693.6 l-8.2,8.2" stroke="#1e1e1e" stroke-width="1.5"/></svg>
<span style="left:-15.50px;top:692.00px;font-size:12px;color:#333;letter-spacing:-0.217px;">Details of "SIFS (K1)"</span>
<div style="left:0px;top:708px;width:409px;height:343px;background:#fff;"></div>
<div style="left:0px;top:1051px;width:409px;height:12px;background:#fff;"></div>
<div style="left:0px;top:708px;width:409px;height:1px;background:#a0a0a0;"></div>
<span style="left:-0.50px;top:712.00px;font-size:11.5px;color:#000;font-weight:bold;letter-spacing:-0.159px;">Definition</span>
<div style="left:0px;top:726px;width:409px;height:1px;background:#a0a0a0;"></div>
<div style="left:109px;top:727px;width:1px;height:17px;background:#a0a0a0;"></div>
<span style="left:-0.50px;top:730.00px;font-size:11.5px;color:#000;letter-spacing:-0.550px;">Type</span>
<span style="left:112.90px;top:730.00px;font-size:11.5px;color:#000;letter-spacing:-0.550px;">SIFS</span>
<div style="left:0px;top:744px;width:409px;height:1px;background:#a0a0a0;"></div>
<div style="left:109px;top:745px;width:1px;height:17px;background:#a0a0a0;"></div>
<span style="left:-0.50px;top:748.00px;font-size:11.5px;color:#000;letter-spacing:-0.067px;">Subtype</span>
<span style="left:112.90px;top:748.00px;font-size:11.5px;color:#000;letter-spacing:-0.550px;">K1</span>
<div style="left:0px;top:762px;width:409px;height:1px;background:#a0a0a0;"></div>
<div style="left:109px;top:763px;width:1px;height:17px;background:#a0a0a0;"></div>
<span style="left:-0.50px;top:766.00px;font-size:11.5px;color:#000;letter-spacing:0.099px;">Contour Start</span>
<span style="left:113.40px;top:766.00px;font-size:11.5px;color:#000;letter-spacing:-0.384px;">1</span>
<div style="left:0px;top:780px;width:409px;height:1px;background:#a0a0a0;"></div>
<div style="left:109px;top:781px;width:1px;height:17px;background:#a0a0a0;"></div>
<span style="left:-0.50px;top:784.00px;font-size:11.5px;color:#000;letter-spacing:0.082px;">Contour End</span>
<span style="left:113.40px;top:784.00px;font-size:11.5px;color:#000;letter-spacing:-0.384px;">6</span>
<div style="left:0px;top:798px;width:409px;height:1px;background:#a0a0a0;"></div>
<div style="left:109px;top:799px;width:1px;height:17px;background:#a0a0a0;"></div>
<span style="left:-0.50px;top:802.00px;font-size:11.5px;color:#000;letter-spacing:0.028px;">Active Contour</span>
<span style="left:112.90px;top:802.00px;font-size:11.5px;color:#000;letter-spacing:-0.383px;">Last</span>
<div style="left:0px;top:816px;width:409px;height:1px;background:#a0a0a0;"></div>
<div style="left:109px;top:817px;width:1px;height:17px;background:#a0a0a0;"></div>
<span style="left:-0.50px;top:820.00px;font-size:11.5px;color:#000;letter-spacing:-0.550px;">By</span>
<span style="left:112.90px;top:820.00px;font-size:11.5px;color:#000;letter-spacing:-0.185px;">Result Set</span>
<div style="left:0px;top:834px;width:409px;height:1px;background:#a0a0a0;"></div>
<div style="left:109px;top:835px;width:1px;height:17px;background:#a0a0a0;"></div>
<span style="left:-0.50px;top:838.00px;font-size:11.5px;color:#000;letter-spacing:-0.173px;">Set Number</span>
<span style="left:112.90px;top:838.00px;font-size:11.5px;color:#000;letter-spacing:-0.383px;">Last</span>
<div style="left:0px;top:852px;width:409px;height:1px;background:#a0a0a0;"></div>
<div style="left:109px;top:853px;width:1px;height:17px;background:#a0a0a0;"></div>
<span style="left:-0.50px;top:856.00px;font-size:11.5px;color:#000;letter-spacing:-0.197px;">Suppressed</span>
<span style="left:112.90px;top:856.00px;font-size:11.5px;color:#000;letter-spacing:0.497px;">No</span>
<div style="left:0px;top:870px;width:409px;height:1px;background:#a0a0a0;"></div>
<span style="left:-0.50px;top:874.00px;font-size:11.5px;color:#000;font-weight:bold;letter-spacing:-0.550px;">Results</span>
<div style="left:110px;top:889px;width:298px;height:17px;background:#e8e6e3;"></div>
<div style="left:0px;top:888px;width:409px;height:1px;background:#a0a0a0;"></div>
<div style="left:109px;top:889px;width:1px;height:17px;background:#a0a0a0;"></div>
<div style="left:-2px;top:891px;width:11px;height:10px;background:#fff;border:1px solid #d0d0d0;"></div>
<span style="left:15.00px;top:892.00px;font-size:11.5px;color:#000;letter-spacing:0.293px;">Minimum</span>
<span style="left:112.90px;top:892.00px;font-size:11.5px;color:#000;letter-spacing:-0.325px;">1777,5 MPa·mm^(0.5)</span>
<div style="left:110px;top:907px;width:298px;height:17px;background:#e8e6e3;"></div>
<div style="left:0px;top:906px;width:409px;height:1px;background:#a0a0a0;"></div>
<div style="left:109px;top:907px;width:1px;height:17px;background:#a0a0a0;"></div>
<div style="left:-2px;top:909px;width:11px;height:10px;background:#fff;border:1px solid #d0d0d0;"></div>
<span style="left:15.00px;top:910.00px;font-size:11.5px;color:#000;letter-spacing:-0.074px;">Maximum</span>
<span style="left:112.90px;top:910.00px;font-size:11.5px;color:#000;letter-spacing:-0.325px;">2044,6 MPa·mm^(0.5)</span>
<div style="left:110px;top:925px;width:298px;height:17px;background:#e8e6e3;"></div>
<div style="left:0px;top:924px;width:409px;height:1px;background:#a0a0a0;"></div>
<div style="left:109px;top:925px;width:1px;height:17px;background:#a0a0a0;"></div>
<span style="left:-0.50px;top:928.00px;font-size:11.5px;color:#000;letter-spacing:-0.025px;">Minimum Occurs On</span>
<span style="left:112.90px;top:928.00px;font-size:11.5px;color:#000;letter-spacing:0.160px;">Printed</span>
<div style="left:110px;top:943px;width:298px;height:17px;background:#e8e6e3;"></div>
<div style="left:0px;top:942px;width:409px;height:1px;background:#a0a0a0;"></div>
<div style="left:109px;top:943px;width:1px;height:17px;background:#a0a0a0;"></div>
<span style="left:-0.50px;top:946.00px;font-size:11.5px;color:#000;letter-spacing:-0.162px;">Maximum Occurs On</span>
<span style="left:112.90px;top:946.00px;font-size:11.5px;color:#000;letter-spacing:0.160px;">Printed</span>
<div style="left:0px;top:960px;width:409px;height:1px;background:#a0a0a0;"></div>
<span style="left:-0.50px;top:964.00px;font-size:11.5px;color:#000;font-weight:bold;letter-spacing:-0.185px;">Information</span>
<div style="left:110px;top:979px;width:298px;height:17px;background:#e8e6e3;"></div>
<div style="left:0px;top:978px;width:409px;height:1px;background:#a0a0a0;"></div>
<div style="left:109px;top:979px;width:1px;height:17px;background:#a0a0a0;"></div>
<span style="left:-0.50px;top:982.00px;font-size:11.5px;color:#000;letter-spacing:-0.514px;">Time</span>
<span style="left:112.90px;top:982.00px;font-size:11.5px;color:#000;letter-spacing:-0.382px;">1, s</span>
<div style="left:110px;top:997px;width:298px;height:17px;background:#e8e6e3;"></div>
<div style="left:0px;top:996px;width:409px;height:1px;background:#a0a0a0;"></div>
<div style="left:109px;top:997px;width:1px;height:17px;background:#a0a0a0;"></div>
<span style="left:-0.50px;top:1000.00px;font-size:11.5px;color:#000;letter-spacing:-0.255px;">Load Step</span>
<span style="left:113.40px;top:1000.00px;font-size:11.5px;color:#000;letter-spacing:-0.384px;">1</span>
<div style="left:110px;top:1015px;width:298px;height:17px;background:#e8e6e3;"></div>
<div style="left:0px;top:1014px;width:409px;height:1px;background:#a0a0a0;"></div>
<div style="left:109px;top:1015px;width:1px;height:17px;background:#a0a0a0;"></div>
<span style="left:-0.50px;top:1018.00px;font-size:11.5px;color:#000;letter-spacing:-0.101px;">Substep</span>
<span style="left:113.40px;top:1018.00px;font-size:11.5px;color:#000;letter-spacing:-0.384px;">1</span>
<div style="left:110px;top:1033px;width:298px;height:17px;background:#e8e6e3;"></div>
<div style="left:0px;top:1032px;width:409px;height:1px;background:#a0a0a0;"></div>
<div style="left:109px;top:1033px;width:1px;height:17px;background:#a0a0a0;"></div>
<span style="left:-0.50px;top:1036.00px;font-size:11.5px;color:#000;letter-spacing:0.143px;">Iteration Number</span>
<span style="left:113.40px;top:1036.00px;font-size:11.5px;color:#000;letter-spacing:-0.384px;">1</span>
<div style="left:0px;top:1050px;width:409px;height:1px;background:#a0a0a0;"></div>
<div style="left:408px;top:708px;width:1px;height:343px;background:#a0a0a0;"></div>
<div style="left:413px;top:112px;width:1483px;height:822px;background:linear-gradient(180deg,#6e8cdf 0%,#ffffff 100%)"></div>
<svg style="left:413px;top:112px;" width="1483" height="822" viewBox="413 112 1483 822"><defs>
<linearGradient id="cyl" gradientUnits="userSpaceOnUse" x1="947" y1="300" x2="1172" y2="287.6">
<stop offset="0" stop-color="#5a5a5a" stop-opacity="0.333"/><stop offset="0.28" stop-color="#5a5a5a" stop-opacity="0.333"/><stop offset="0.55" stop-color="#848484" stop-opacity="0.37"/><stop offset="0.86" stop-color="#aeaeae" stop-opacity="0.41"/><stop offset="1" stop-color="#b2b2b2" stop-opacity="0.41"/></linearGradient>
<linearGradient id="low" gradientUnits="userSpaceOnUse" x1="0" y1="472" x2="0" y2="756">
<stop offset="0" stop-color="#5a5a5a" stop-opacity="0.333"/><stop offset="0.03" stop-color="#5c5c5c" stop-opacity="0.333"/><stop offset="0.45" stop-color="#949494" stop-opacity="0.40"/><stop offset="1" stop-color="#bbbbbb" stop-opacity="0.65"/></linearGradient>
<linearGradient id="strip" gradientUnits="userSpaceOnUse" x1="0" y1="537" x2="0" y2="735">
<stop offset="0" stop-color="#b0b0b8" stop-opacity="0.40"/><stop offset="1" stop-color="#d4d4d8" stop-opacity="0.65"/></linearGradient>
<radialGradient id="sphC" cx="0.4" cy="0.35" r="0.7"><stop offset="0" stop-color="#30e0e0"/><stop offset="1" stop-color="#009a9a"/></radialGradient>
<radialGradient id="sphB" cx="0.4" cy="0.35" r="0.7"><stop offset="0" stop-color="#1818f0"/><stop offset="1" stop-color="#0000a0"/></radialGradient>
</defs><path d="M946,130.7 C950,142 972,158 1002.4,165.5 C1030,170 1050,168.6 1074.9,165.9 C1100,161.6 1125,153 1147.3,141 C1156,134 1160,128 1160.1,122.4 L1171.7,330 L1179.2,460 L1181.4,520 L1179,550 L1177.3,537 L1175.6,526 L1173.2,516.3 L1170,509 L1165.9,501.8 L1160,494 L1153.5,487.3 L1146,482.2 L1137,478 L1122,474 L1105.9,471.8 L1058,471.8 L1029.3,474.9 L964.6,479 L963.5,460 L956.9,330 Z" fill="url(#cyl)" shape-rendering="crispEdges"/><path d="M954,112 C950,116 946.6,121 945.9,127.5 L946,130.7 C950,142 972,158 1002.4,165.5 C1030,170 1050,168.6 1074.9,165.9 C1100,161.6 1125,153 1147.3,141 C1156,134 1160,128 1160.1,122.4 L1159.3,112 Z" fill="#8d8d8d" fill-opacity="0.385" shape-rendering="crispEdges"/><path d="M964.6,479 L969.8,540 L973.5,560 L979.7,573 L984.8,591 L989,622 L993.1,664 L997.3,705 L1000.4,736 L1001.4,758.6 L1074.9,755.9 L1115,753.8 L1135,751 L1152.5,747.2 L1170,740.6 L1190.6,734.8 L1186.4,705 L1181.4,678 L1177.3,643 L1173.4,585 L1174,562 L1177.3,537 L1175.6,526 L1173.2,516.3 L1170,509 L1165.9,501.8 L1160,494 L1153.5,487.3 L1146,482.2 L1137,478 L1122,474 L1105.9,471.8 L1058,471.8 L1029.3,474.9 Z" fill="url(#low)" shape-rendering="crispEdges"/><path d="M965.4,490 L969.8,540 L973.5,560 L979.7,573 L976.5,556 L973.6,530 L970,500 Z" fill="#fff" fill-opacity="0.10"/><path d="M1177.3,537 L1179,550 L1175.2,571 L1174.4,592 L1176.3,622 L1179.4,653 L1183.5,678 L1188.7,707 L1192.4,734.2 L1190.6,734.8 L1186.4,705 L1181.4,678 L1177.3,643 L1173.4,585 L1174,562 Z" fill="url(#strip)" shape-rendering="crispEdges"/><path d="M1148.3,715.5 V734" stroke="#fff" stroke-width="1"/><path d="M1126.5,706.5 h16.5 l6,9.0 l-6,9.0 h-16.5 z" fill="#fff" stroke="#000" stroke-width="1"/><path d="M1126.5,741.5 h14.5 l6,9.0 l-6,9.0 h-14.5 z" fill="#fff" stroke="#000" stroke-width="1"/><rect x="1144.3" y="733" width="1.8" height="7.4" fill="#111"/><rect x="1147.4" y="733" width="2.2" height="16.4" fill="#111"/><rect x="1149.6" y="733" width="2.2" height="4" fill="#111"/><rect x="1145.6" y="739.6" width="1.9" height="8.6" fill="#f00"/><rect x="1149.6" y="739.6" width="2.4" height="8.6" fill="#f00"/><rect x="1145.6" y="737" width="1.9" height="1.4" fill="#20e0c0"/><rect x="1145.6" y="738.2" width="1.9" height="1.5" fill="#f0f000"/><rect x="1149.6" y="737" width="2.4" height="1.4" fill="#20e0c0"/><rect x="1149.6" y="738.2" width="2.4" height="1.5" fill="#f0f000"/><rect x="1145.4" y="748.4" width="6.4" height="7.4" fill="#111"/><path d="M1146.6,752.6 h2.6 v-3" fill="none" stroke="#eee" stroke-width="1"/><path d="M1787.6,778 L1793,778 L1794.8,834.3 L1789.9,834.3 Z" fill="#066e06"/><path d="M1787.6,778 L1789.4,778 L1791.4,834.3 L1789.9,834.3 Z" fill="#0c8c0c"/><path d="M1788.6,757 L1798.2,778 Q1789.5,780.6 1780.8,778 Z" fill="#0a7d0a"/><path d="M1788.6,757 L1786,778.6 Q1783,778.6 1780.8,778 Z" fill="#12a012"/><rect x="1789.9" y="834.3" width="4.9" height="22" fill="#0808d8"/><circle cx="1792.1" cy="860.8" r="8.4" fill="url(#sphB)"/><path d="M1794.8,831 L1857,828.7 L1857,834.3 L1794.8,837 Z" fill="#d80808"/><path d="M1794.8,835 L1857,832.6 L1857,834.3 L1794.8,837 Z" fill="#a00000"/><path d="M1856.9,823.7 L1878.4,831.4 L1856.9,841.1 Q1854.6,832.4 1856.9,823.7 Z" fill="#e01010"/><path d="M1856.9,841.1 L1878.4,831.4 L1856.4,833 Z" fill="#b00000"/><circle cx="1829.4" cy="813.3" r="8.6" fill="url(#sphC)"/><rect x="428" y="237" width="16" height="153" fill="#000"/><rect x="429" y="239.80" width="14" height="15.60" fill="#ff0000"/><rect x="429" y="256.32" width="14" height="15.60" fill="#ffb200"/><rect x="429" y="272.84" width="14" height="15.60" fill="#ffff00"/><rect x="429" y="289.36" width="14" height="15.60" fill="#b2ff00"/><rect x="429" y="305.88" width="14" height="15.60" fill="#00d800"/><rect x="429" y="322.40" width="14" height="15.60" fill="#00f0a0"/><rect x="429" y="338.92" width="14" height="15.60" fill="#00ffff"/><rect x="429" y="355.44" width="14" height="15.60" fill="#00b2ff"/><rect x="429" y="371.96" width="14" height="15.60" fill="#0000ff"/></svg>
<span style="left:427.00px;top:128.00px;font-size:12px;color:#000;font-weight:bold;transform:scaleX(0.9686);transform-origin:0 0;">F: Copy of With Symmetry</span>
<span style="left:427.80px;top:143.00px;font-size:12px;color:#000;transform:scaleX(0.8484);transform-origin:0 0;">SIFS (K1)</span>
<span style="left:427.80px;top:158.00px;font-size:12px;color:#000;transform:scaleX(0.9534);transform-origin:0 0;">Type: SIFS - Contour 6</span>
<span style="left:427.80px;top:173.00px;font-size:12px;color:#000;transform:scaleX(1.0067);transform-origin:0 0;">Unit: MPa·mm^(0.5)</span>
<span style="left:427.80px;top:188.00px;font-size:12px;color:#000;transform:scaleX(0.9529);transform-origin:0 0;">Time: 1</span>
<span style="left:427.80px;top:203.00px;font-size:12px;color:#000;transform:scaleX(0.9088);transform-origin:0 0;">01.10.2021 16:26</span>
<span style="left:451.30px;top:232.00px;font-size:12px;color:#000;font-weight:bold;transform:scaleX(1.0254);transform-origin:0 0;">2044,6 Max</span>
<span style="left:451.80px;top:248.00px;font-size:12px;color:#000;transform:scaleX(0.9063);transform-origin:0 0;">2015</span>
<span style="left:451.80px;top:265.00px;font-size:12px;color:#000;transform:scaleX(0.9127);transform-origin:0 0;">1985,3</span>
<span style="left:451.80px;top:282.00px;font-size:12px;color:#000;transform:scaleX(0.9127);transform-origin:0 0;">1955,6</span>
<span style="left:451.80px;top:298.00px;font-size:12px;color:#000;transform:scaleX(0.9127);transform-origin:0 0;">1925,9</span>
<span style="left:451.80px;top:315.00px;font-size:12px;color:#000;transform:scaleX(0.9127);transform-origin:0 0;">1896,2</span>
<span style="left:451.80px;top:332.00px;font-size:12px;color:#000;transform:scaleX(0.9127);transform-origin:0 0;">1866,5</span>
<span style="left:451.80px;top:348.00px;font-size:12px;color:#000;transform:scaleX(0.9127);transform-origin:0 0;">1836,8</span>
<span style="left:451.80px;top:365.00px;font-size:12px;color:#000;transform:scaleX(0.9127);transform-origin:0 0;">1807,2</span>
<span style="left:451.50px;top:382.00px;font-size:12px;color:#000;font-weight:bold;transform:scaleX(1.0263);transform-origin:0 0;">1777,5 Min</span>
<span style="left:1129.40px;top:711.00px;font-size:12px;color:#000;">2</span>
<span style="left:1129.40px;top:746.00px;font-size:12px;color:#000;">1</span>
<span style="left:1786.80px;top:737.00px;font-size:11px;color:#10b010;">Y</span>
<span style="left:1791.00px;top:866.00px;font-size:11px;color:#1010e0;">Z</span>
<span style="left:1890.00px;top:821.00px;font-size:12px;color:#f01010;">X</span>
<span style="left:1798.10px;top:137.00px;font-size:30px;color:#fff;font-weight:bold;transform:scaleX(0.7740);transform-origin:0 0;-webkit-text-stroke:0.5px #fff;">ANSYS</span>
<span style="left:1857.70px;top:165.00px;font-size:17px;color:#fff;font-weight:bold;transform:scaleX(0.9386);transform-origin:0 0;">R3</span>
<span style="left:1819.30px;top:165.00px;font-size:17px;color:#fff;transform:scaleX(0.9147);transform-origin:0 0;">2019</span>
<div style="left:413px;top:938px;width:1483px;height:1px;background:#d5d6e2;"></div>
<div style="left:413px;top:938px;width:1px;height:20px;background:#d5d6e2;"></div>
<svg style="left:413px;top:938px;" width="1483" height="20" viewBox="413 938 1483 20"><defs><pattern id="dots3" x="0" y="1" width="4" height="4" patternUnits="userSpaceOnUse"><rect x="0" y="0" width="1" height="1" fill="#a6a6b0"/><rect x="2" y="2" width="1" height="1" fill="#a6a6b0"/></pattern></defs><rect x="488" y="945" width="1358" height="5" fill="url(#dots3)"/><path d="M1852.2,946 h8.6 l-4.3,4.4 z" fill="#1e1e1e"/><path d="M1869.6,942.5 h4.6 M1870.2,942.5 v6 M1873.4,942.5 v6 M1872.5,942.5 v6 M1867.8,948.6 h8.2 M1871.9,948.6 v4" stroke="#1e1e1e" stroke-width="1" fill="none"/><path d="M1884.6,943.4 l8,8 M1892.6,943.4 l-8,8" stroke="#1e1e1e" stroke-width="1.5"/></svg>
<span style="left:417.50px;top:942.00px;font-size:12px;color:#444;letter-spacing:-0.232px;">Tabular Data</span>
<div style="left:413px;top:958px;width:1483px;height:105px;background:#e8e6e3;"></div>
<div style="left:1742px;top:958px;width:143px;height:105px;background:#a0a0a0;"></div>
<div style="left:1885px;top:958px;width:11px;height:105px;background:#f0f0f0;"></div>
<div style="left:1885px;top:1000px;width:11px;height:18px;background:#cdcdcd;"></div>
<div style="left:413px;top:975px;width:21px;height:88px;background:#f2f2f2;"></div>
<span style="left:422.60px;top:968.00px;font-size:11px;color:#000;">9</span>
<span style="left:437.60px;top:968.00px;font-size:11px;color:#000;">1,2308</span>
<span style="left:509.60px;top:968.00px;font-size:11px;color:#000;">1783,6</span>
<span style="left:715.60px;top:968.00px;font-size:11px;color:#000;">2015,9</span>
<span style="left:921.60px;top:968.00px;font-size:11px;color:#000;">2024,1</span>
<span style="left:1127.60px;top:968.00px;font-size:11px;color:#000;">2026,3</span>
<span style="left:1333.60px;top:968.00px;font-size:11px;color:#000;">2028,2</span>
<span style="left:1539.60px;top:968.00px;font-size:11px;color:#000;">2028,7</span>
<span style="left:415.90px;top:983.00px;font-size:11px;color:#000;letter-spacing:0.150px;">10</span>
<span style="left:437.60px;top:983.00px;font-size:11px;color:#000;">1,3846</span>
<span style="left:509.60px;top:983.00px;font-size:11px;color:#000;">1781,4</span>
<span style="left:715.60px;top:983.00px;font-size:11px;color:#000;">2015,8</span>
<span style="left:921.60px;top:983.00px;font-size:11px;color:#000;">2025,9</span>
<span style="left:1127.60px;top:983.00px;font-size:11px;color:#000;">2027,4</span>
<span style="left:1333.60px;top:983.00px;font-size:11px;color:#000;">2029,1</span>
<span style="left:1539.60px;top:983.00px;font-size:11px;color:#000;">2029,5</span>
<span style="left:415.90px;top:998.00px;font-size:11px;color:#000;letter-spacing:0.978px;">11</span>
<span style="left:437.60px;top:998.00px;font-size:11px;color:#000;">1,5385</span>
<span style="left:509.60px;top:998.00px;font-size:11px;color:#000;">1779,3</span>
<span style="left:715.60px;top:998.00px;font-size:11px;color:#000;">2015,7</span>
<span style="left:921.60px;top:998.00px;font-size:11px;color:#000;">2027,4</span>
<span style="left:1127.60px;top:998.00px;font-size:11px;color:#000;">2028,4</span>
<span style="left:1333.60px;top:998.00px;font-size:11px;color:#000;">2029,9</span>
<span style="left:1539.60px;top:998.00px;font-size:11px;color:#000;">2030,4</span>
<span style="left:415.90px;top:1013.00px;font-size:11px;color:#000;letter-spacing:0.150px;">12</span>
<span style="left:437.60px;top:1013.00px;font-size:11px;color:#000;">1,6923</span>
<span style="left:509.60px;top:1013.00px;font-size:11px;color:#000;">1779,2</span>
<span style="left:715.60px;top:1013.00px;font-size:11px;color:#000;">2013,6</span>
<span style="left:921.60px;top:1013.00px;font-size:11px;color:#000;">2027,8</span>
<span style="left:1127.60px;top:1013.00px;font-size:11px;color:#000;">2028,9</span>
<span style="left:1333.60px;top:1013.00px;font-size:11px;color:#000;">2030,1</span>
<span style="left:1539.60px;top:1013.00px;font-size:11px;color:#000;">2030,5</span>
<span style="left:415.90px;top:1028.00px;font-size:11px;color:#000;letter-spacing:0.150px;">13</span>
<span style="left:437.60px;top:1028.00px;font-size:11px;color:#000;">1,8462</span>
<span style="left:509.60px;top:1028.00px;font-size:11px;color:#000;">1779,1</span>
<span style="left:715.60px;top:1028.00px;font-size:11px;color:#000;">2011,4</span>
<span style="left:921.60px;top:1028.00px;font-size:11px;color:#000;">2028,1</span>
<span style="left:1127.60px;top:1028.00px;font-size:11px;color:#000;">2029,4</span>
<span style="left:1333.60px;top:1028.00px;font-size:11px;color:#000;">2030,3</span>
<span style="left:1539.60px;top:1028.00px;font-size:11px;color:#000;">2030,6</span>
<span style="left:415.90px;top:1043.00px;font-size:11px;color:#000;letter-spacing:0.150px;">14</span>
<span style="left:437.60px;top:1043.00px;font-size:11px;color:#000;">2,</span>
<span style="left:509.60px;top:1043.00px;font-size:11px;color:#000;">1786,2</span>
<span style="left:715.60px;top:1043.00px;font-size:11px;color:#000;">2012,9</span>
<span style="left:921.60px;top:1043.00px;font-size:11px;color:#000;">2030,2</span>
<span style="left:1127.60px;top:1043.00px;font-size:11px;color:#000;">2031,6</span>
<span style="left:1333.60px;top:1043.00px;font-size:11px;color:#000;">2032,4</span>
<span style="left:1539.60px;top:1043.00px;font-size:11px;color:#000;">2032,7</span>
<span style="left:415.90px;top:1058.00px;font-size:11px;color:#000;letter-spacing:0.150px;">15</span>
<span style="left:437.60px;top:1058.00px;font-size:11px;color:#000;">2,1538</span>
<span style="left:509.60px;top:1058.00px;font-size:11px;color:#000;">1793,4</span>
<span style="left:715.60px;top:1058.00px;font-size:11px;color:#000;">2014,5</span>
<span style="left:921.60px;top:1058.00px;font-size:11px;color:#000;">2032,3</span>
<span style="left:1127.60px;top:1058.00px;font-size:11px;color:#000;">2033,8</span>
<span style="left:1333.60px;top:1058.00px;font-size:11px;color:#000;">2034,5</span>
<span style="left:1539.60px;top:1058.00px;font-size:11px;color:#000;">2034,9</span>
<div style="left:434px;top:979px;width:1308px;height:1px;background:#b4b4b4;"></div>
<div style="left:413px;top:979px;width:21px;height:1px;background:#6a6a6a;"></div>
<div style="left:434px;top:994px;width:1308px;height:1px;background:#b4b4b4;"></div>
<div style="left:413px;top:994px;width:21px;height:1px;background:#6a6a6a;"></div>
<div style="left:434px;top:1009px;width:1308px;height:1px;background:#b4b4b4;"></div>
<div style="left:413px;top:1009px;width:21px;height:1px;background:#6a6a6a;"></div>
<div style="left:434px;top:1024px;width:1308px;height:1px;background:#b4b4b4;"></div>
<div style="left:413px;top:1024px;width:21px;height:1px;background:#6a6a6a;"></div>
<div style="left:434px;top:1039px;width:1308px;height:1px;background:#b4b4b4;"></div>
<div style="left:413px;top:1039px;width:21px;height:1px;background:#6a6a6a;"></div>
<div style="left:434px;top:1054px;width:1308px;height:1px;background:#b4b4b4;"></div>
<div style="left:413px;top:1054px;width:21px;height:1px;background:#6a6a6a;"></div>
<div style="left:505px;top:975px;width:1px;height:88px;background:#b4b4b4;"></div>
<div style="left:711px;top:975px;width:1px;height:88px;background:#b4b4b4;"></div>
<div style="left:917px;top:975px;width:1px;height:88px;background:#b4b4b4;"></div>
<div style="left:1123px;top:975px;width:1px;height:88px;background:#b4b4b4;"></div>
<div style="left:1329px;top:975px;width:1px;height:88px;background:#b4b4b4;"></div>
<div style="left:1535px;top:975px;width:1px;height:88px;background:#b4b4b4;"></div>
<div style="left:1741px;top:975px;width:1px;height:88px;background:#b4b4b4;"></div>
<div style="left:433px;top:958px;width:1px;height:105px;background:#4a4a4a;"></div>
<div style="left:413px;top:958px;width:1329px;height:17px;background:#f0f0f0;"></div>
<div style="left:433px;top:958px;width:1px;height:17px;background:#4a4a4a;"></div>
<div style="left:505px;top:958px;width:1px;height:17px;background:#5a5a5a;"></div>
<div style="left:506px;top:958px;width:1px;height:17px;background:#fff;"></div>
<div style="left:711px;top:958px;width:1px;height:17px;background:#5a5a5a;"></div>
<div style="left:712px;top:958px;width:1px;height:17px;background:#fff;"></div>
<div style="left:917px;top:958px;width:1px;height:17px;background:#5a5a5a;"></div>
<div style="left:918px;top:958px;width:1px;height:17px;background:#fff;"></div>
<div style="left:1123px;top:958px;width:1px;height:17px;background:#5a5a5a;"></div>
<div style="left:1124px;top:958px;width:1px;height:17px;background:#fff;"></div>
<div style="left:1329px;top:958px;width:1px;height:17px;background:#5a5a5a;"></div>
<div style="left:1330px;top:958px;width:1px;height:17px;background:#fff;"></div>
<div style="left:1535px;top:958px;width:1px;height:17px;background:#5a5a5a;"></div>
<div style="left:1536px;top:958px;width:1px;height:17px;background:#fff;"></div>
<div style="left:1741px;top:958px;width:1px;height:17px;background:#5a5a5a;"></div>
<div style="left:1742px;top:958px;width:1px;height:17px;background:#fff;"></div>
<div style="left:434px;top:974px;width:1308px;height:1px;background:#5a5a5a;"></div>
<div style="left:434px;top:975px;width:1308px;height:1px;background:#8a8a8a;"></div>
<span style="left:437.00px;top:962.00px;font-size:11.5px;color:#000;letter-spacing:-0.142px;">Length [mm]</span>
<div style="left:509px;top:960px;width:14px;height:14px;background:#fff;border-top:1px solid #6a6a6a;border-left:1px solid #6a6a6a;box-shadow:inset 1px 1px 0 #a8a8a8;width:13px;height:13px;"></div>
<span style="left:527.70px;top:962.00px;font-size:11.5px;color:#d0081c;letter-spacing:-0.338px;">SIFS (K1) Contour 1 [MPa·mm^(0.5)]</span>
<div style="left:715px;top:960px;width:14px;height:14px;background:#fff;border-top:1px solid #6a6a6a;border-left:1px solid #6a6a6a;box-shadow:inset 1px 1px 0 #a8a8a8;width:13px;height:13px;"></div>
<span style="left:734.20px;top:962.00px;font-size:11.5px;color:#1a901a;letter-spacing:-0.350px;">SIFS (K1) Contour 2 [MPa·mm^(0.5)]</span>
<div style="left:921px;top:960px;width:14px;height:14px;background:#fff;border-top:1px solid #6a6a6a;border-left:1px solid #6a6a6a;box-shadow:inset 1px 1px 0 #a8a8a8;width:13px;height:13px;"></div>
<span style="left:940.30px;top:962.00px;font-size:11.5px;color:#1c1cd0;letter-spacing:-0.362px;">SIFS (K1) Contour 3 [MPa·mm^(0.5)]</span>
<div style="left:1127px;top:960px;width:14px;height:14px;background:#fff;border-top:1px solid #6a6a6a;border-left:1px solid #6a6a6a;box-shadow:inset 1px 1px 0 #a8a8a8;width:13px;height:13px;"></div>
<span style="left:1146.30px;top:962.00px;font-size:11.5px;color:#b010c8;letter-spacing:-0.347px;">SIFS (K1) Contour 4 [MPa·mm^(0.5)]</span>
<div style="left:1333px;top:960px;width:14px;height:14px;background:#fff;border-top:1px solid #6a6a6a;border-left:1px solid #6a6a6a;box-shadow:inset 1px 1px 0 #a8a8a8;width:13px;height:13px;"></div>
<span style="left:1351.80px;top:962.00px;font-size:11.5px;color:#d4621a;letter-spacing:-0.341px;">SIFS (K1) Contour 5 [MPa·mm^(0.5)]</span>
<div style="left:1539px;top:960px;width:14px;height:14px;background:#fff;border-top:1px solid #6a6a6a;border-left:1px solid #6a6a6a;box-shadow:inset 1px 1px 0 #a8a8a8;width:13px;height:13px;"></div>
<span style="left:1557.50px;top:962.00px;font-size:11.5px;color:#0a8c8c;letter-spacing:-0.329px;">SIFS (K1) Contour 6 [MPa·mm^(0.5)]</span>
<svg style="left:413px;top:958px;" width="1483" height="105" viewBox="413 958 1483 105"><path d="M512.4,966.6 l2.6,2.8 l4.8,-5.8" fill="none" stroke="#000" stroke-width="1.8"/><path d="M718.4,966.6 l2.6,2.8 l4.8,-5.8" fill="none" stroke="#000" stroke-width="1.8"/><path d="M924.4,966.6 l2.6,2.8 l4.8,-5.8" fill="none" stroke="#000" stroke-width="1.8"/><path d="M1130.4,966.6 l2.6,2.8 l4.8,-5.8" fill="none" stroke="#000" stroke-width="1.8"/><path d="M1336.4,966.6 l2.6,2.8 l4.8,-5.8" fill="none" stroke="#000" stroke-width="1.8"/><path d="M1542.4,966.6 l2.6,2.8 l4.8,-5.8" fill="none" stroke="#000" stroke-width="1.8"/><path d="M1887.4,969.6 l3.2,-3.4 l3.2,3.4" fill="none" stroke="#444" stroke-width="1.3"/><path d="M1887.4,1057 l3.2,3.4 l3.2,-3.4" fill="none" stroke="#444" stroke-width="1.3"/></svg>
</body></html>
